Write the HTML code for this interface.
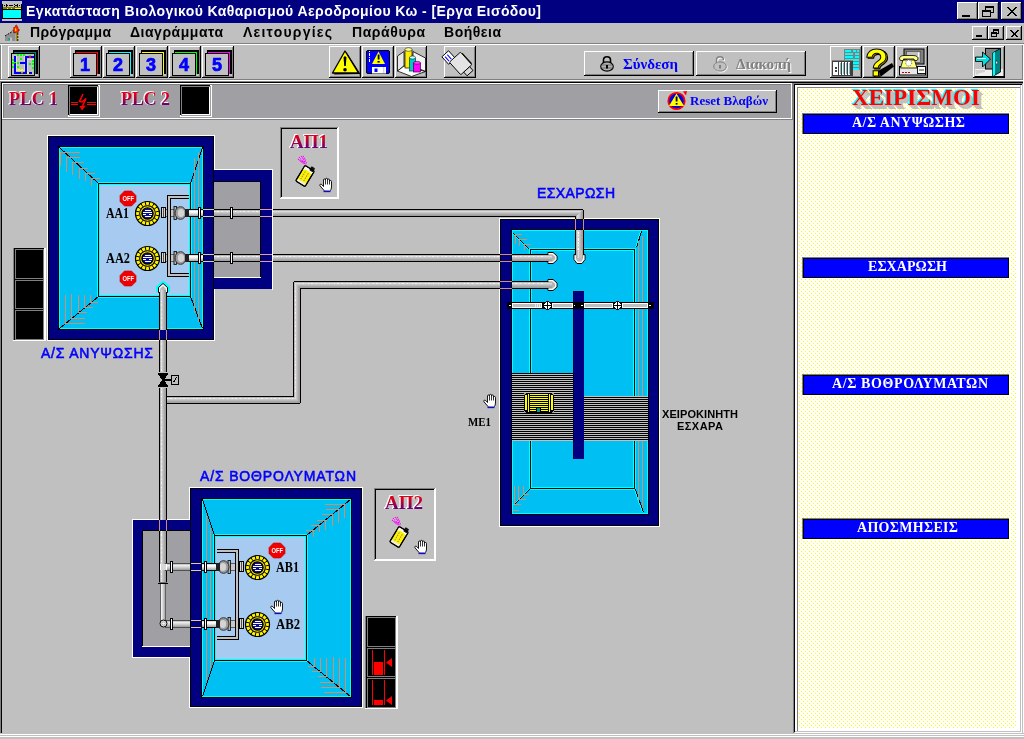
<!DOCTYPE html>
<html><head><meta charset="utf-8"><title>SCADA</title>
<style>
html,body{margin:0;padding:0}
body{width:1024px;height:739px;overflow:hidden;background:#c0c0c0;position:relative;font-family:"Liberation Sans",sans-serif}
</style></head><body>
<svg width="1024" height="739" viewBox="0 0 1024 739" shape-rendering="crispEdges" style="position:absolute;left:0;top:0;will-change:transform"><defs><linearGradient id="rb" x1="0" y1="0" x2="0" y2="1"><stop offset="0" stop-color="#ff0000"/><stop offset="0.45" stop-color="#c00030"/><stop offset="1" stop-color="#3000a0"/></linearGradient></defs><rect x="214" y="170" width="58" height="119" fill="#000080"/><rect x="214" y="169" width="59" height="1" fill="#ffffff"/><rect x="272" y="169" width="1" height="121" fill="#ffffff"/><rect x="214" y="182" width="46" height="95" fill="#a0a0a4"/><rect x="214" y="181" width="47" height="1" fill="#000000"/><rect x="260" y="181" width="1" height="97" fill="#000000"/><rect x="214" y="277" width="47" height="1" fill="#ffffff"/><rect x="47" y="135" width="168" height="1" fill="#ffffff"/><rect x="47" y="340" width="168" height="1" fill="#ffffff"/><rect x="47" y="135" width="1" height="206" fill="#ffffff"/><rect x="214" y="135" width="1" height="206" fill="#ffffff"/><rect x="48" y="136" width="166" height="204" fill="#000080"/><rect x="48" y="136" width="166" height="1" fill="#000000"/><rect x="48" y="339" width="166" height="1" fill="#000000"/><rect x="48" y="136" width="1" height="204" fill="#000000"/><rect x="213" y="136" width="1" height="204" fill="#000000"/><rect x="59" y="147" width="144" height="182" fill="#00bff3"/><rect x="59" y="147" width="144" height="1" fill="#00ffff"/><rect x="59" y="328" width="144" height="1" fill="#00ffff"/><rect x="59" y="147" width="1" height="182" fill="#00ffff"/><rect x="202" y="147" width="1" height="182" fill="#00ffff"/><rect x="58" y="146" width="146" height="1" fill="#000000"/><rect x="58" y="329" width="146" height="1" fill="#000000"/><rect x="58" y="146" width="1" height="184" fill="#000000"/><rect x="203" y="146" width="1" height="184" fill="#000000"/><rect x="99" y="184" width="92" height="113" fill="#a6caf0"/><rect x="97" y="182" width="95" height="1" fill="#00ffff"/><rect x="97" y="297" width="95" height="1" fill="#00ffff"/><rect x="97" y="182" width="1" height="116" fill="#00ffff"/><rect x="191" y="182" width="1" height="116" fill="#00ffff"/><rect x="99" y="184" width="91" height="1" fill="#00ffff"/><rect x="99" y="295" width="91" height="1" fill="#00ffff"/><rect x="99" y="184" width="1" height="112" fill="#00ffff"/><rect x="189" y="184" width="1" height="112" fill="#00ffff"/><rect x="98" y="183" width="93" height="1" fill="#000000"/><rect x="98" y="296" width="93" height="1" fill="#000000"/><rect x="98" y="183" width="1" height="114" fill="#000000"/><rect x="190" y="183" width="1" height="114" fill="#000000"/><line x1="59.5" y1="147.5" x2="98.5" y2="183.5" stroke="#000000" stroke-width="1"/><line x1="202.5" y1="147.5" x2="190.5" y2="183.5" stroke="#000000" stroke-width="1"/><line x1="59.5" y1="328.5" x2="98.5" y2="296.5" stroke="#000000" stroke-width="1"/><line x1="202.5" y1="328.5" x2="190.5" y2="296.5" stroke="#000000" stroke-width="1"/><rect x="214" y="170" width="1" height="119" fill="#000080"/><rect x="214" y="182" width="1" height="95" fill="#a0a0a4"/><rect x="214" y="181" width="1" height="1" fill="#000000"/><rect x="214" y="277" width="1" height="1" fill="#ffffff"/><rect x="60" y="152" width="20" height="1" fill="#d0906c"/><rect x="67" y="157" width="13" height="1" fill="#d0906c"/><rect x="72" y="162" width="12" height="1" fill="#d0906c"/><rect x="79" y="168" width="9" height="1" fill="#d0906c"/><rect x="85" y="173" width="10" height="1" fill="#d0906c"/><rect x="91" y="178" width="9" height="1" fill="#d0906c"/><rect x="60" y="152" width="1" height="14" fill="#d0906c"/><rect x="66" y="157" width="1" height="15" fill="#d0906c"/><rect x="72" y="162" width="1" height="13" fill="#d0906c"/><rect x="79" y="168" width="1" height="11" fill="#d0906c"/><rect x="85" y="173" width="1" height="8" fill="#d0906c"/><rect x="91" y="178" width="1" height="8" fill="#d0906c"/><rect x="91" y="302" width="7" height="1" fill="#d0906c"/><rect x="85" y="307" width="8" height="1" fill="#d0906c"/><rect x="79" y="312" width="8" height="1" fill="#d0906c"/><rect x="72" y="318" width="13" height="1" fill="#d0906c"/><rect x="66" y="323" width="19" height="1" fill="#d0906c"/><rect x="65" y="295" width="1" height="29" fill="#d0906c"/><rect x="71" y="294" width="1" height="25" fill="#d0906c"/><rect x="78" y="295" width="1" height="18" fill="#d0906c"/><rect x="84" y="295" width="1" height="13" fill="#d0906c"/><rect x="90" y="295" width="1" height="8" fill="#d0906c"/><rect x="194" y="158" width="1" height="155" fill="#d0906c"/><rect x="198" y="152" width="1" height="170" fill="#d0906c"/><rect x="499" y="218" width="161" height="1" fill="#ffffff"/><rect x="499" y="526" width="161" height="1" fill="#ffffff"/><rect x="499" y="218" width="1" height="309" fill="#ffffff"/><rect x="659" y="218" width="1" height="309" fill="#ffffff"/><rect x="500" y="219" width="159" height="307" fill="#000080"/><rect x="500" y="219" width="159" height="1" fill="#000000"/><rect x="500" y="525" width="159" height="1" fill="#000000"/><rect x="500" y="219" width="1" height="307" fill="#000000"/><rect x="658" y="219" width="1" height="307" fill="#000000"/><rect x="512" y="230" width="136" height="284" fill="#00bff3"/><rect x="512" y="230" width="136" height="1" fill="#00ffff"/><rect x="512" y="513" width="136" height="1" fill="#00ffff"/><rect x="512" y="230" width="1" height="284" fill="#00ffff"/><rect x="647" y="230" width="1" height="284" fill="#00ffff"/><rect x="511" y="229" width="138" height="1" fill="#000000"/><rect x="511" y="514" width="138" height="1" fill="#000000"/><rect x="511" y="229" width="1" height="286" fill="#000000"/><rect x="648" y="229" width="1" height="286" fill="#000000"/><rect x="531" y="250" width="104" height="239" fill="#00bff3"/><rect x="529" y="248" width="107" height="1" fill="#00ffff"/><rect x="529" y="489" width="107" height="1" fill="#00ffff"/><rect x="529" y="248" width="1" height="242" fill="#00ffff"/><rect x="635" y="248" width="1" height="242" fill="#00ffff"/><rect x="531" y="250" width="103" height="1" fill="#00ffff"/><rect x="531" y="487" width="103" height="1" fill="#00ffff"/><rect x="531" y="250" width="1" height="238" fill="#00ffff"/><rect x="633" y="250" width="1" height="238" fill="#00ffff"/><rect x="530" y="249" width="105" height="1" fill="#000000"/><rect x="530" y="488" width="105" height="1" fill="#000000"/><rect x="530" y="249" width="1" height="240" fill="#000000"/><rect x="634" y="249" width="1" height="240" fill="#000000"/><line x1="512.5" y1="233.5" x2="528.5" y2="249.5" stroke="#00ffff" stroke-width="1"/><line x1="513.5" y1="233.5" x2="529.5" y2="249.5" stroke="#000000" stroke-width="1"/><line x1="640.5" y1="231.5" x2="635.5" y2="247.5" stroke="#00ffff" stroke-width="1"/><line x1="641.5" y1="231.5" x2="636.5" y2="247.5" stroke="#000000" stroke-width="1"/><line x1="512.5" y1="505.5" x2="529.5" y2="488.5" stroke="#00ffff" stroke-width="1"/><line x1="513.5" y1="505.5" x2="530.5" y2="488.5" stroke="#000000" stroke-width="1"/><line x1="642.5" y1="512.5" x2="634.5" y2="489.5" stroke="#00ffff" stroke-width="1"/><line x1="643.5" y1="512.5" x2="635.5" y2="489.5" stroke="#000000" stroke-width="1"/><rect x="515" y="234" width="7" height="1" fill="#d0906c"/><rect x="519" y="239" width="8" height="1" fill="#d0906c"/><rect x="524" y="244" width="7" height="1" fill="#d0906c"/><rect x="515" y="234" width="1" height="10" fill="#d0906c"/><rect x="519" y="239" width="1" height="7" fill="#d0906c"/><rect x="524" y="244" width="1" height="6" fill="#d0906c"/><rect x="524" y="494" width="5" height="1" fill="#d0906c"/><rect x="519" y="499" width="7" height="1" fill="#d0906c"/><rect x="515" y="504" width="6" height="1" fill="#d0906c"/><rect x="513" y="510" width="6" height="1" fill="#d0906c"/><rect x="514" y="486" width="1" height="19" fill="#d0906c"/><rect x="518" y="486" width="1" height="14" fill="#d0906c"/><rect x="523" y="486" width="1" height="9" fill="#d0906c"/><rect x="638" y="241" width="1" height="259" fill="#d0906c"/><rect x="642" y="236" width="1" height="272" fill="#d0906c"/><rect x="512" y="373" width="61" height="68" fill="#c0c0c0"/><rect x="512" y="373" width="61" height="1" fill="#000000"/><rect x="512" y="375" width="61" height="1" fill="#000000"/><rect x="512" y="377" width="61" height="1" fill="#000000"/><rect x="512" y="379" width="61" height="1" fill="#000000"/><rect x="512" y="381" width="61" height="1" fill="#000000"/><rect x="512" y="383" width="61" height="1" fill="#000000"/><rect x="512" y="385" width="61" height="1" fill="#000000"/><rect x="512" y="387" width="61" height="1" fill="#000000"/><rect x="512" y="389" width="61" height="1" fill="#000000"/><rect x="512" y="391" width="61" height="1" fill="#000000"/><rect x="512" y="393" width="61" height="1" fill="#000000"/><rect x="512" y="395" width="61" height="1" fill="#000000"/><rect x="512" y="397" width="61" height="1" fill="#000000"/><rect x="512" y="399" width="61" height="1" fill="#000000"/><rect x="512" y="401" width="61" height="1" fill="#000000"/><rect x="512" y="403" width="61" height="1" fill="#000000"/><rect x="512" y="405" width="61" height="1" fill="#000000"/><rect x="512" y="407" width="61" height="1" fill="#000000"/><rect x="512" y="409" width="61" height="1" fill="#000000"/><rect x="512" y="411" width="61" height="1" fill="#000000"/><rect x="512" y="413" width="61" height="1" fill="#000000"/><rect x="512" y="415" width="61" height="1" fill="#000000"/><rect x="512" y="417" width="61" height="1" fill="#000000"/><rect x="512" y="419" width="61" height="1" fill="#000000"/><rect x="512" y="421" width="61" height="1" fill="#000000"/><rect x="512" y="423" width="61" height="1" fill="#000000"/><rect x="512" y="425" width="61" height="1" fill="#000000"/><rect x="512" y="427" width="61" height="1" fill="#000000"/><rect x="512" y="429" width="61" height="1" fill="#000000"/><rect x="512" y="431" width="61" height="1" fill="#000000"/><rect x="512" y="433" width="61" height="1" fill="#000000"/><rect x="512" y="435" width="61" height="1" fill="#000000"/><rect x="512" y="437" width="61" height="1" fill="#000000"/><rect x="512" y="439" width="61" height="1" fill="#000000"/><rect x="584" y="396" width="64" height="45" fill="#c0c0c0"/><rect x="584" y="397" width="64" height="1" fill="#000000"/><rect x="584" y="399" width="64" height="1" fill="#000000"/><rect x="584" y="401" width="64" height="1" fill="#000000"/><rect x="584" y="403" width="64" height="1" fill="#000000"/><rect x="584" y="405" width="64" height="1" fill="#000000"/><rect x="584" y="407" width="64" height="1" fill="#000000"/><rect x="584" y="409" width="64" height="1" fill="#000000"/><rect x="584" y="411" width="64" height="1" fill="#000000"/><rect x="584" y="413" width="64" height="1" fill="#000000"/><rect x="584" y="415" width="64" height="1" fill="#000000"/><rect x="584" y="417" width="64" height="1" fill="#000000"/><rect x="584" y="419" width="64" height="1" fill="#000000"/><rect x="584" y="421" width="64" height="1" fill="#000000"/><rect x="584" y="423" width="64" height="1" fill="#000000"/><rect x="584" y="425" width="64" height="1" fill="#000000"/><rect x="584" y="427" width="64" height="1" fill="#000000"/><rect x="584" y="429" width="64" height="1" fill="#000000"/><rect x="584" y="431" width="64" height="1" fill="#000000"/><rect x="584" y="433" width="64" height="1" fill="#000000"/><rect x="584" y="435" width="64" height="1" fill="#000000"/><rect x="584" y="437" width="64" height="1" fill="#000000"/><rect x="584" y="439" width="64" height="1" fill="#000000"/><rect x="573" y="291" width="11" height="168" fill="#000080"/><rect x="573" y="291" width="1" height="168" fill="#000040"/><rect x="573" y="291" width="11" height="1" fill="#000040"/><rect x="507" y="302" width="147" height="7" fill="#000000"/><rect x="512" y="303" width="30" height="5" fill="#ffffff"/><rect x="513" y="304" width="28" height="3" fill="#c0c0c0"/><rect x="552" y="303" width="21" height="5" fill="#ffffff"/><rect x="553" y="304" width="19" height="3" fill="#c0c0c0"/><rect x="584" y="303" width="29" height="5" fill="#ffffff"/><rect x="585" y="304" width="27" height="3" fill="#c0c0c0"/><rect x="622" y="303" width="26" height="5" fill="#ffffff"/><rect x="623" y="304" width="24" height="3" fill="#c0c0c0"/><rect x="509" y="305" width="2" height="1" fill="#ffffff"/><rect x="649" y="305" width="2" height="1" fill="#ffffff"/><rect x="574" y="305" width="1" height="1" fill="#ffffff"/><rect x="581" y="305" width="2" height="1" fill="#ffffff"/><rect x="546" y="301" width="1" height="1" fill="#000000"/><rect x="547" y="301" width="1" height="1" fill="#000000"/><rect x="548" y="301" width="1" height="1" fill="#000000"/><rect x="544" y="302" width="1" height="1" fill="#000000"/><rect x="545" y="302" width="1" height="1" fill="#000000"/><rect x="546" y="302" width="1" height="1" fill="#ffffff"/><rect x="547" y="302" width="1" height="1" fill="#000000"/><rect x="548" y="302" width="1" height="1" fill="#ffffff"/><rect x="549" y="302" width="1" height="1" fill="#000000"/><rect x="550" y="302" width="1" height="1" fill="#000000"/><rect x="544" y="303" width="1" height="1" fill="#000000"/><rect x="545" y="303" width="1" height="1" fill="#ffffff"/><rect x="546" y="303" width="1" height="1" fill="#ffffff"/><rect x="547" y="303" width="1" height="1" fill="#000000"/><rect x="548" y="303" width="1" height="1" fill="#ffffff"/><rect x="549" y="303" width="1" height="1" fill="#ffffff"/><rect x="550" y="303" width="1" height="1" fill="#000000"/><rect x="543" y="304" width="1" height="1" fill="#000000"/><rect x="544" y="304" width="1" height="1" fill="#ffffff"/><rect x="545" y="304" width="1" height="1" fill="#ffffff"/><rect x="546" y="304" width="1" height="1" fill="#ffffff"/><rect x="547" y="304" width="1" height="1" fill="#000000"/><rect x="548" y="304" width="1" height="1" fill="#ffffff"/><rect x="549" y="304" width="1" height="1" fill="#ffffff"/><rect x="550" y="304" width="1" height="1" fill="#ffffff"/><rect x="551" y="304" width="1" height="1" fill="#000000"/><rect x="543" y="305" width="1" height="1" fill="#000000"/><rect x="544" y="305" width="1" height="1" fill="#000000"/><rect x="545" y="305" width="1" height="1" fill="#000000"/><rect x="546" y="305" width="1" height="1" fill="#000000"/><rect x="547" y="305" width="1" height="1" fill="#000000"/><rect x="548" y="305" width="1" height="1" fill="#000000"/><rect x="549" y="305" width="1" height="1" fill="#000000"/><rect x="550" y="305" width="1" height="1" fill="#000000"/><rect x="551" y="305" width="1" height="1" fill="#000000"/><rect x="543" y="306" width="1" height="1" fill="#000000"/><rect x="544" y="306" width="1" height="1" fill="#ffffff"/><rect x="545" y="306" width="1" height="1" fill="#ffffff"/><rect x="546" y="306" width="1" height="1" fill="#ffffff"/><rect x="547" y="306" width="1" height="1" fill="#000000"/><rect x="548" y="306" width="1" height="1" fill="#ffffff"/><rect x="549" y="306" width="1" height="1" fill="#ffffff"/><rect x="550" y="306" width="1" height="1" fill="#ffffff"/><rect x="551" y="306" width="1" height="1" fill="#000000"/><rect x="544" y="307" width="1" height="1" fill="#000000"/><rect x="545" y="307" width="1" height="1" fill="#ffffff"/><rect x="546" y="307" width="1" height="1" fill="#ffffff"/><rect x="547" y="307" width="1" height="1" fill="#000000"/><rect x="548" y="307" width="1" height="1" fill="#ffffff"/><rect x="549" y="307" width="1" height="1" fill="#ffffff"/><rect x="550" y="307" width="1" height="1" fill="#000000"/><rect x="544" y="308" width="1" height="1" fill="#000000"/><rect x="545" y="308" width="1" height="1" fill="#000000"/><rect x="546" y="308" width="1" height="1" fill="#ffffff"/><rect x="547" y="308" width="1" height="1" fill="#000000"/><rect x="548" y="308" width="1" height="1" fill="#ffffff"/><rect x="549" y="308" width="1" height="1" fill="#000000"/><rect x="550" y="308" width="1" height="1" fill="#000000"/><rect x="546" y="309" width="1" height="1" fill="#000000"/><rect x="547" y="309" width="1" height="1" fill="#000000"/><rect x="548" y="309" width="1" height="1" fill="#000000"/><rect x="616" y="301" width="1" height="1" fill="#000000"/><rect x="617" y="301" width="1" height="1" fill="#000000"/><rect x="618" y="301" width="1" height="1" fill="#000000"/><rect x="614" y="302" width="1" height="1" fill="#000000"/><rect x="615" y="302" width="1" height="1" fill="#000000"/><rect x="616" y="302" width="1" height="1" fill="#ffffff"/><rect x="617" y="302" width="1" height="1" fill="#000000"/><rect x="618" y="302" width="1" height="1" fill="#ffffff"/><rect x="619" y="302" width="1" height="1" fill="#000000"/><rect x="620" y="302" width="1" height="1" fill="#000000"/><rect x="614" y="303" width="1" height="1" fill="#000000"/><rect x="615" y="303" width="1" height="1" fill="#ffffff"/><rect x="616" y="303" width="1" height="1" fill="#ffffff"/><rect x="617" y="303" width="1" height="1" fill="#000000"/><rect x="618" y="303" width="1" height="1" fill="#ffffff"/><rect x="619" y="303" width="1" height="1" fill="#ffffff"/><rect x="620" y="303" width="1" height="1" fill="#000000"/><rect x="613" y="304" width="1" height="1" fill="#000000"/><rect x="614" y="304" width="1" height="1" fill="#ffffff"/><rect x="615" y="304" width="1" height="1" fill="#ffffff"/><rect x="616" y="304" width="1" height="1" fill="#ffffff"/><rect x="617" y="304" width="1" height="1" fill="#000000"/><rect x="618" y="304" width="1" height="1" fill="#ffffff"/><rect x="619" y="304" width="1" height="1" fill="#ffffff"/><rect x="620" y="304" width="1" height="1" fill="#ffffff"/><rect x="621" y="304" width="1" height="1" fill="#000000"/><rect x="613" y="305" width="1" height="1" fill="#000000"/><rect x="614" y="305" width="1" height="1" fill="#000000"/><rect x="615" y="305" width="1" height="1" fill="#000000"/><rect x="616" y="305" width="1" height="1" fill="#000000"/><rect x="617" y="305" width="1" height="1" fill="#000000"/><rect x="618" y="305" width="1" height="1" fill="#000000"/><rect x="619" y="305" width="1" height="1" fill="#000000"/><rect x="620" y="305" width="1" height="1" fill="#000000"/><rect x="621" y="305" width="1" height="1" fill="#000000"/><rect x="613" y="306" width="1" height="1" fill="#000000"/><rect x="614" y="306" width="1" height="1" fill="#ffffff"/><rect x="615" y="306" width="1" height="1" fill="#ffffff"/><rect x="616" y="306" width="1" height="1" fill="#ffffff"/><rect x="617" y="306" width="1" height="1" fill="#000000"/><rect x="618" y="306" width="1" height="1" fill="#ffffff"/><rect x="619" y="306" width="1" height="1" fill="#ffffff"/><rect x="620" y="306" width="1" height="1" fill="#ffffff"/><rect x="621" y="306" width="1" height="1" fill="#000000"/><rect x="614" y="307" width="1" height="1" fill="#000000"/><rect x="615" y="307" width="1" height="1" fill="#ffffff"/><rect x="616" y="307" width="1" height="1" fill="#ffffff"/><rect x="617" y="307" width="1" height="1" fill="#000000"/><rect x="618" y="307" width="1" height="1" fill="#ffffff"/><rect x="619" y="307" width="1" height="1" fill="#ffffff"/><rect x="620" y="307" width="1" height="1" fill="#000000"/><rect x="614" y="308" width="1" height="1" fill="#000000"/><rect x="615" y="308" width="1" height="1" fill="#000000"/><rect x="616" y="308" width="1" height="1" fill="#ffffff"/><rect x="617" y="308" width="1" height="1" fill="#000000"/><rect x="618" y="308" width="1" height="1" fill="#ffffff"/><rect x="619" y="308" width="1" height="1" fill="#000000"/><rect x="620" y="308" width="1" height="1" fill="#000000"/><rect x="616" y="309" width="1" height="1" fill="#000000"/><rect x="617" y="309" width="1" height="1" fill="#000000"/><rect x="618" y="309" width="1" height="1" fill="#000000"/><rect x="535" y="304" width="1" height="3" fill="#e8e8e8"/><rect x="537" y="304" width="1" height="3" fill="#e8e8e8"/><rect x="539" y="304" width="1" height="3" fill="#e8e8e8"/><rect x="524" y="393" width="30" height="20" fill="#000000"/><rect x="524" y="393" width="1" height="1" fill="#a0a0a0"/><rect x="525" y="393" width="1" height="1" fill="#a0a0a0"/><rect x="524" y="394" width="1" height="1" fill="#a0a0a0"/><rect x="553" y="393" width="1" height="1" fill="#a0a0a0"/><rect x="552" y="393" width="1" height="1" fill="#a0a0a0"/><rect x="553" y="394" width="1" height="1" fill="#a0a0a0"/><rect x="524" y="412" width="1" height="1" fill="#a0a0a0"/><rect x="525" y="412" width="1" height="1" fill="#a0a0a0"/><rect x="524" y="411" width="1" height="1" fill="#a0a0a0"/><rect x="553" y="412" width="1" height="1" fill="#a0a0a0"/><rect x="552" y="412" width="1" height="1" fill="#a0a0a0"/><rect x="553" y="411" width="1" height="1" fill="#a0a0a0"/><rect x="525" y="395" width="2" height="15" fill="#ffff00"/><rect x="528" y="394" width="1" height="18" fill="#ffff00"/><rect x="549" y="394" width="1" height="18" fill="#ffff00"/><rect x="551" y="395" width="2" height="15" fill="#ffff00"/><rect x="530" y="394" width="18" height="1" fill="#ffff00"/><rect x="530" y="396" width="18" height="1" fill="#ffff00"/><rect x="530" y="398" width="18" height="1" fill="#ffff00"/><rect x="530" y="400" width="18" height="1" fill="#ffff00"/><rect x="530" y="402" width="18" height="1" fill="#ffff00"/><rect x="530" y="404" width="18" height="1" fill="#ffff00"/><rect x="530" y="406" width="18" height="1" fill="#ffff00"/><rect x="530" y="408" width="18" height="1" fill="#ffff00"/><rect x="530" y="410" width="18" height="1" fill="#ffff00"/><rect x="536" y="407" width="5" height="7" fill="#000000"/><rect x="537" y="408" width="3" height="4" fill="#009090"/><rect x="133" y="520" width="58" height="137" fill="#000080"/><rect x="132" y="519" width="59" height="1" fill="#ffffff"/><rect x="132" y="519" width="1" height="139" fill="#ffffff"/><rect x="132" y="657" width="59" height="1" fill="#ffffff"/><rect x="143" y="531" width="48" height="115" fill="#a0a0a4"/><rect x="142" y="530" width="49" height="1" fill="#000000"/><rect x="142" y="530" width="1" height="117" fill="#000000"/><rect x="142" y="646" width="49" height="1" fill="#ffffff"/><rect x="189" y="487" width="174" height="1" fill="#ffffff"/><rect x="189" y="707" width="174" height="1" fill="#ffffff"/><rect x="189" y="487" width="1" height="221" fill="#ffffff"/><rect x="362" y="487" width="1" height="221" fill="#ffffff"/><rect x="190" y="488" width="172" height="219" fill="#000080"/><rect x="190" y="488" width="172" height="1" fill="#000000"/><rect x="190" y="706" width="172" height="1" fill="#000000"/><rect x="190" y="488" width="1" height="219" fill="#000000"/><rect x="361" y="488" width="1" height="219" fill="#000000"/><rect x="202" y="499" width="149" height="198" fill="#00bff3"/><rect x="202" y="499" width="149" height="1" fill="#00ffff"/><rect x="202" y="696" width="149" height="1" fill="#00ffff"/><rect x="202" y="499" width="1" height="198" fill="#00ffff"/><rect x="350" y="499" width="1" height="198" fill="#00ffff"/><rect x="201" y="498" width="151" height="1" fill="#000000"/><rect x="201" y="697" width="151" height="1" fill="#000000"/><rect x="201" y="498" width="1" height="200" fill="#000000"/><rect x="351" y="498" width="1" height="200" fill="#000000"/><rect x="215" y="536" width="92" height="125" fill="#a6caf0"/><rect x="213" y="534" width="95" height="1" fill="#00ffff"/><rect x="213" y="661" width="95" height="1" fill="#00ffff"/><rect x="213" y="534" width="1" height="128" fill="#00ffff"/><rect x="307" y="534" width="1" height="128" fill="#00ffff"/><rect x="215" y="536" width="91" height="1" fill="#00ffff"/><rect x="215" y="659" width="91" height="1" fill="#00ffff"/><rect x="215" y="536" width="1" height="124" fill="#00ffff"/><rect x="305" y="536" width="1" height="124" fill="#00ffff"/><rect x="214" y="535" width="93" height="1" fill="#000000"/><rect x="214" y="660" width="93" height="1" fill="#000000"/><rect x="214" y="535" width="1" height="126" fill="#000000"/><rect x="306" y="535" width="1" height="126" fill="#000000"/><line x1="202.5" y1="499.5" x2="214.5" y2="535.5" stroke="#000000" stroke-width="1"/><line x1="350.5" y1="499.5" x2="306.5" y2="535.5" stroke="#000000" stroke-width="1"/><line x1="202.5" y1="696.5" x2="214.5" y2="660.5" stroke="#000000" stroke-width="1"/><line x1="350.5" y1="696.5" x2="306.5" y2="660.5" stroke="#000000" stroke-width="1"/><rect x="189" y="520" width="1" height="137" fill="#000080"/><rect x="189" y="531" width="1" height="115" fill="#a0a0a4"/><rect x="189" y="530" width="1" height="1" fill="#000000"/><rect x="189" y="646" width="1" height="1" fill="#ffffff"/><rect x="325" y="504" width="20" height="1" fill="#d0906c"/><rect x="326" y="509" width="13" height="1" fill="#d0906c"/><rect x="322" y="514" width="11" height="1" fill="#d0906c"/><rect x="317" y="520" width="10" height="1" fill="#d0906c"/><rect x="311" y="525" width="10" height="1" fill="#d0906c"/><rect x="306" y="530" width="9" height="1" fill="#d0906c"/><rect x="344" y="504" width="1" height="14" fill="#d0906c"/><rect x="338" y="509" width="1" height="14" fill="#d0906c"/><rect x="332" y="514" width="1" height="12" fill="#d0906c"/><rect x="325" y="520" width="1" height="10" fill="#d0906c"/><rect x="319" y="525" width="1" height="7" fill="#d0906c"/><rect x="313" y="530" width="1" height="7" fill="#d0906c"/><rect x="308" y="666" width="7" height="1" fill="#d0906c"/><rect x="312" y="671" width="9" height="1" fill="#d0906c"/><rect x="318" y="676" width="9" height="1" fill="#d0906c"/><rect x="320" y="682" width="14" height="1" fill="#d0906c"/><rect x="321" y="687" width="19" height="1" fill="#d0906c"/><rect x="324" y="692" width="22" height="1" fill="#d0906c"/><rect x="314" y="658" width="1" height="9" fill="#d0906c"/><rect x="320" y="658" width="1" height="14" fill="#d0906c"/><rect x="326" y="658" width="1" height="19" fill="#d0906c"/><rect x="333" y="657" width="1" height="26" fill="#d0906c"/><rect x="339" y="658" width="1" height="30" fill="#d0906c"/><rect x="345" y="658" width="1" height="35" fill="#d0906c"/><rect x="206" y="515" width="1" height="166" fill="#d0906c"/><rect x="210" y="528" width="1" height="141" fill="#d0906c"/><rect x="214" y="209" width="46" height="1" fill="#000000"/><rect x="214" y="210" width="46" height="1" fill="#b8b8b0"/><rect x="214" y="211" width="46" height="1" fill="#dcdcdc"/><rect x="214" y="212" width="46" height="1" fill="#c8c8cc"/><rect x="214" y="213" width="46" height="1" fill="#b8b8bc"/><rect x="214" y="214" width="46" height="1" fill="#a8a8ac"/><rect x="214" y="215" width="46" height="1" fill="#a0a098"/><rect x="214" y="216" width="46" height="1" fill="#000000"/><line x1="214" y1="211.5" x2="260" y2="211.5" stroke="#f4f4f4" stroke-width="1" stroke-dasharray="1 2 2 3 1 4"/><rect x="203" y="209" width="11" height="1" fill="#d8d488"/><rect x="203" y="216" width="11" height="1" fill="#d8d488"/><rect x="260" y="209" width="12" height="1" fill="#e0a0a0"/><rect x="260" y="216" width="12" height="1" fill="#e0a0a0"/><rect x="273" y="209" width="310" height="1" fill="#000000"/><rect x="273" y="210" width="310" height="1" fill="#b8b8b0"/><rect x="273" y="211" width="310" height="1" fill="#dcdcdc"/><rect x="273" y="212" width="310" height="1" fill="#c8c8cc"/><rect x="273" y="213" width="310" height="1" fill="#b8b8bc"/><rect x="273" y="214" width="310" height="1" fill="#a8a8ac"/><rect x="273" y="215" width="310" height="1" fill="#a0a098"/><rect x="273" y="216" width="310" height="1" fill="#000000"/><line x1="273" y1="211.5" x2="583" y2="211.5" stroke="#f4f4f4" stroke-width="1" stroke-dasharray="1 2 2 3 1 4"/><rect x="575" y="212" width="1" height="7" fill="#000000"/><rect x="576" y="212" width="1" height="7" fill="#b8b8b0"/><rect x="577" y="212" width="1" height="7" fill="#dcdcdc"/><rect x="578" y="212" width="1" height="7" fill="#d0d0d0"/><rect x="579" y="212" width="1" height="7" fill="#c8c8cc"/><rect x="580" y="212" width="1" height="7" fill="#b8b8bc"/><rect x="581" y="212" width="1" height="7" fill="#a8a8ac"/><rect x="582" y="212" width="1" height="7" fill="#a0a098"/><rect x="583" y="212" width="1" height="7" fill="#000000"/><rect x="273" y="209" width="310" height="1" fill="#000000"/><rect x="273" y="210" width="309" height="1" fill="#b8b8b0"/><rect x="273" y="211" width="308" height="1" fill="#dcdcdc"/><rect x="273" y="212" width="307" height="1" fill="#c8c8cc"/><rect x="273" y="213" width="306" height="1" fill="#b8b8bc"/><rect x="273" y="214" width="305" height="1" fill="#a8a8ac"/><rect x="273" y="215" width="304" height="1" fill="#a0a098"/><rect x="273" y="216" width="303" height="1" fill="#000000"/><rect x="575" y="217" width="1" height="2" fill="#000000"/><rect x="576" y="216" width="1" height="3" fill="#b8b8b0"/><rect x="577" y="215" width="1" height="4" fill="#dcdcdc"/><rect x="578" y="214" width="1" height="5" fill="#d0d0d0"/><rect x="579" y="213" width="1" height="6" fill="#c8c8cc"/><rect x="580" y="212" width="1" height="7" fill="#b8b8bc"/><rect x="581" y="211" width="1" height="8" fill="#a8a8ac"/><rect x="582" y="210" width="1" height="9" fill="#a0a098"/><rect x="583" y="209" width="1" height="10" fill="#000000"/><rect x="583" y="209" width="1" height="1" fill="#c0c0c0"/><rect x="273" y="209" width="310" height="1" fill="#000000"/><rect x="583" y="210" width="1" height="9" fill="#000000"/><rect x="575" y="217" width="1" height="2" fill="#000000"/><line x1="575.5" y1="219" x2="575.5" y2="230" stroke="#d0906c"/><line x1="583.5" y1="219" x2="583.5" y2="230" stroke="#d0906c"/><rect x="575" y="230" width="1" height="27" fill="#000000"/><rect x="576" y="230" width="1" height="27" fill="#b8b8b0"/><rect x="577" y="230" width="1" height="27" fill="#dcdcdc"/><rect x="578" y="230" width="1" height="27" fill="#d0d0d0"/><rect x="579" y="230" width="1" height="27" fill="#c8c8cc"/><rect x="580" y="230" width="1" height="27" fill="#b8b8bc"/><rect x="581" y="230" width="1" height="27" fill="#a8a8ac"/><rect x="582" y="230" width="1" height="27" fill="#a0a098"/><rect x="583" y="230" width="1" height="27" fill="#000000"/><line x1="578.5" y1="232" x2="578.5" y2="256" stroke="#fff" stroke-width="1" stroke-dasharray="2 1 1 2 3 1"/><g shape-rendering="auto"><path d="M574 254.5 L585 254.5 L585 259.5 L582 263.5 L577 263.5 L574 259.5 Z" fill="#b8b8b8" stroke="#000" stroke-width="1"/><path d="M575.2 255.5 L575.2 259.2 L577.6 262.3 L581.4 262.3 L583.8 259.2 L583.8 255.5" fill="none" stroke="#fff" stroke-width="1.2"/></g><rect x="576" y="250" width="7" height="8" fill="#c0c0c0"/><rect x="576" y="250" width="1" height="8" fill="#a8a8a8"/><rect x="582" y="250" width="1" height="8" fill="#a0a098"/><rect x="578" y="250" width="1" height="8" fill="#dcdcdc"/><rect x="214" y="254" width="46" height="1" fill="#000000"/><rect x="214" y="255" width="46" height="1" fill="#b8b8b0"/><rect x="214" y="256" width="46" height="1" fill="#dcdcdc"/><rect x="214" y="257" width="46" height="1" fill="#c8c8cc"/><rect x="214" y="258" width="46" height="1" fill="#b8b8bc"/><rect x="214" y="259" width="46" height="1" fill="#a8a8ac"/><rect x="214" y="260" width="46" height="1" fill="#a0a098"/><rect x="214" y="261" width="46" height="1" fill="#000000"/><line x1="214" y1="256.5" x2="260" y2="256.5" stroke="#f4f4f4" stroke-width="1" stroke-dasharray="1 2 2 3 1 4"/><rect x="203" y="254" width="11" height="1" fill="#d8d488"/><rect x="203" y="261" width="11" height="1" fill="#d8d488"/><rect x="260" y="254" width="12" height="1" fill="#e0a0a0"/><rect x="260" y="261" width="12" height="1" fill="#e0a0a0"/><rect x="273" y="254" width="227" height="1" fill="#000000"/><rect x="273" y="255" width="227" height="1" fill="#b8b8b0"/><rect x="273" y="256" width="227" height="1" fill="#dcdcdc"/><rect x="273" y="257" width="227" height="1" fill="#c8c8cc"/><rect x="273" y="258" width="227" height="1" fill="#b8b8bc"/><rect x="273" y="259" width="227" height="1" fill="#a8a8ac"/><rect x="273" y="260" width="227" height="1" fill="#a0a098"/><rect x="273" y="261" width="227" height="1" fill="#000000"/><line x1="273" y1="256.5" x2="500" y2="256.5" stroke="#f4f4f4" stroke-width="1" stroke-dasharray="1 2 2 3 1 4"/><rect x="500" y="254" width="12" height="1" fill="#d0906c"/><rect x="500" y="261" width="12" height="1" fill="#d0906c"/><rect x="512" y="254" width="38" height="1" fill="#000000"/><rect x="512" y="255" width="38" height="1" fill="#b8b8b0"/><rect x="512" y="256" width="38" height="1" fill="#dcdcdc"/><rect x="512" y="257" width="38" height="1" fill="#c8c8cc"/><rect x="512" y="258" width="38" height="1" fill="#b8b8bc"/><rect x="512" y="259" width="38" height="1" fill="#a8a8ac"/><rect x="512" y="260" width="38" height="1" fill="#a0a098"/><rect x="512" y="261" width="38" height="1" fill="#000000"/><line x1="512" y1="256.5" x2="550" y2="256.5" stroke="#f4f4f4" stroke-width="1" stroke-dasharray="1 2 2 3 1 4"/><rect x="295" y="281" width="205" height="1" fill="#000000"/><rect x="295" y="282" width="205" height="1" fill="#b8b8b0"/><rect x="295" y="283" width="205" height="1" fill="#dcdcdc"/><rect x="295" y="284" width="205" height="1" fill="#c8c8cc"/><rect x="295" y="285" width="205" height="1" fill="#b8b8bc"/><rect x="295" y="286" width="205" height="1" fill="#a8a8ac"/><rect x="295" y="287" width="205" height="1" fill="#a0a098"/><rect x="295" y="288" width="205" height="1" fill="#000000"/><line x1="295" y1="283.5" x2="500" y2="283.5" stroke="#f4f4f4" stroke-width="1" stroke-dasharray="1 2 2 3 1 4"/><rect x="500" y="281" width="12" height="1" fill="#d0906c"/><rect x="500" y="288" width="12" height="1" fill="#d0906c"/><rect x="512" y="281" width="38" height="1" fill="#000000"/><rect x="512" y="282" width="38" height="1" fill="#b8b8b0"/><rect x="512" y="283" width="38" height="1" fill="#dcdcdc"/><rect x="512" y="284" width="38" height="1" fill="#c8c8cc"/><rect x="512" y="285" width="38" height="1" fill="#b8b8bc"/><rect x="512" y="286" width="38" height="1" fill="#a8a8ac"/><rect x="512" y="287" width="38" height="1" fill="#a0a098"/><rect x="512" y="288" width="38" height="1" fill="#000000"/><line x1="512" y1="283.5" x2="550" y2="283.5" stroke="#f4f4f4" stroke-width="1" stroke-dasharray="1 2 2 3 1 4"/><rect x="293" y="283" width="1" height="119" fill="#000000"/><rect x="294" y="283" width="1" height="119" fill="#b8b8b0"/><rect x="295" y="283" width="1" height="119" fill="#dcdcdc"/><rect x="296" y="283" width="1" height="119" fill="#c8c8cc"/><rect x="297" y="283" width="1" height="119" fill="#b8b8bc"/><rect x="298" y="283" width="1" height="119" fill="#a8a8ac"/><rect x="299" y="283" width="1" height="119" fill="#a0a098"/><rect x="300" y="283" width="1" height="119" fill="#000000"/><line x1="295.5" y1="283" x2="295.5" y2="402" stroke="#f4f4f4" stroke-width="1" stroke-dasharray="1 2 2 3 1 4"/><rect x="293" y="281" width="8" height="1" fill="#000000"/><rect x="293" y="281" width="1" height="9" fill="#000000"/><rect x="294" y="282" width="7" height="1" fill="#b8b8b0"/><rect x="294" y="282" width="1" height="8" fill="#b8b8b0"/><rect x="295" y="283" width="6" height="1" fill="#dcdcdc"/><rect x="295" y="283" width="1" height="7" fill="#dcdcdc"/><rect x="296" y="284" width="5" height="1" fill="#c8c8cc"/><rect x="296" y="284" width="1" height="6" fill="#c8c8cc"/><rect x="297" y="285" width="4" height="1" fill="#b8b8bc"/><rect x="297" y="285" width="1" height="5" fill="#b8b8bc"/><rect x="298" y="286" width="3" height="1" fill="#a8a8ac"/><rect x="298" y="286" width="1" height="4" fill="#a8a8ac"/><rect x="299" y="287" width="2" height="1" fill="#a0a098"/><rect x="299" y="287" width="1" height="3" fill="#a0a098"/><rect x="300" y="288" width="1" height="1" fill="#000000"/><rect x="300" y="288" width="1" height="2" fill="#000000"/><rect x="293" y="281" width="1" height="1" fill="#c0c0c0"/><rect x="294" y="281" width="7" height="1" fill="#000000"/><rect x="293" y="282" width="1" height="8" fill="#000000"/><rect x="300" y="288" width="1" height="1" fill="#000000"/><rect x="167" y="396" width="133" height="1" fill="#000000"/><rect x="167" y="397" width="133" height="1" fill="#b8b8b0"/><rect x="167" y="398" width="133" height="1" fill="#dcdcdc"/><rect x="167" y="399" width="133" height="1" fill="#c8c8cc"/><rect x="167" y="400" width="133" height="1" fill="#b8b8bc"/><rect x="167" y="401" width="133" height="1" fill="#a8a8ac"/><rect x="167" y="402" width="133" height="1" fill="#a0a098"/><rect x="167" y="403" width="133" height="1" fill="#000000"/><line x1="167" y1="398.5" x2="300" y2="398.5" stroke="#f4f4f4" stroke-width="1" stroke-dasharray="1 2 2 3 1 4"/><rect x="293" y="403" width="8" height="1" fill="#000000"/><rect x="300" y="395" width="1" height="9" fill="#000000"/><rect x="293" y="402" width="7" height="1" fill="#a0a098"/><rect x="299" y="395" width="1" height="8" fill="#a0a098"/><rect x="293" y="401" width="6" height="1" fill="#a8a8ac"/><rect x="298" y="395" width="1" height="7" fill="#a8a8ac"/><rect x="293" y="400" width="5" height="1" fill="#b8b8bc"/><rect x="297" y="395" width="1" height="6" fill="#b8b8bc"/><rect x="293" y="399" width="4" height="1" fill="#c8c8cc"/><rect x="296" y="395" width="1" height="5" fill="#c8c8cc"/><rect x="293" y="398" width="3" height="1" fill="#dcdcdc"/><rect x="295" y="395" width="1" height="4" fill="#dcdcdc"/><rect x="293" y="397" width="2" height="1" fill="#b8b8b0"/><rect x="294" y="395" width="1" height="3" fill="#b8b8b0"/><rect x="293" y="396" width="1" height="1" fill="#000000"/><rect x="293" y="395" width="1" height="2" fill="#000000"/><rect x="300" y="403" width="1" height="1" fill="#c0c0c0"/><rect x="300" y="290" width="1" height="113" fill="#000000"/><rect x="167" y="403" width="133" height="1" fill="#000000"/><rect x="293" y="290" width="1" height="107" fill="#000000"/><g shape-rendering="auto"><path d="M548 252.5 L553 252.5 L557 256 L557 260 L553 263.5 L548 263.5 Z" fill="#b4b4b4" stroke="#000" stroke-width="1"/><path d="M548.5 253.7 L552.6 253.7 L555.8 256.5 L555.8 259.5 L552.6 262.3 L548.5 262.3" fill="none" stroke="#fff" stroke-width="1.2"/></g><rect x="546" y="255" width="6" height="1" fill="#b8b8b0"/><rect x="546" y="256" width="6" height="1" fill="#dcdcdc"/><rect x="546" y="257" width="6" height="1" fill="#c8c8cc"/><rect x="546" y="258" width="6" height="1" fill="#b8b8bc"/><rect x="546" y="259" width="6" height="1" fill="#a8a8ac"/><rect x="546" y="260" width="6" height="1" fill="#a0a098"/><g shape-rendering="auto"><path d="M548 279.5 L553 279.5 L557 283 L557 287 L553 290.5 L548 290.5 Z" fill="#b4b4b4" stroke="#000" stroke-width="1"/><path d="M548.5 280.7 L552.6 280.7 L555.8 283.5 L555.8 286.5 L552.6 289.3 L548.5 289.3" fill="none" stroke="#fff" stroke-width="1.2"/></g><rect x="546" y="282" width="6" height="1" fill="#b8b8b0"/><rect x="546" y="283" width="6" height="1" fill="#dcdcdc"/><rect x="546" y="284" width="6" height="1" fill="#c8c8cc"/><rect x="546" y="285" width="6" height="1" fill="#b8b8bc"/><rect x="546" y="286" width="6" height="1" fill="#a8a8ac"/><rect x="546" y="287" width="6" height="1" fill="#a0a098"/><rect x="159" y="288" width="1" height="42" fill="#000000"/><rect x="160" y="288" width="1" height="42" fill="#b8b8b0"/><rect x="161" y="288" width="1" height="42" fill="#dcdcdc"/><rect x="162" y="288" width="1" height="42" fill="#c8c8cc"/><rect x="163" y="288" width="1" height="42" fill="#b8b8bc"/><rect x="164" y="288" width="1" height="42" fill="#a8a8ac"/><rect x="165" y="288" width="1" height="42" fill="#a0a098"/><rect x="166" y="288" width="1" height="42" fill="#000000"/><line x1="161.5" y1="288" x2="161.5" y2="330" stroke="#f4f4f4" stroke-width="1" stroke-dasharray="1 2 2 3 1 4"/><rect x="159" y="330" width="1" height="10" fill="#d0906c"/><rect x="166" y="330" width="1" height="10" fill="#d0906c"/><rect x="159" y="340" width="1" height="32" fill="#000000"/><rect x="160" y="340" width="1" height="32" fill="#b8b8b0"/><rect x="161" y="340" width="1" height="32" fill="#dcdcdc"/><rect x="162" y="340" width="1" height="32" fill="#c8c8cc"/><rect x="163" y="340" width="1" height="32" fill="#b8b8bc"/><rect x="164" y="340" width="1" height="32" fill="#a8a8ac"/><rect x="165" y="340" width="1" height="32" fill="#a0a098"/><rect x="166" y="340" width="1" height="32" fill="#000000"/><line x1="161.5" y1="340" x2="161.5" y2="372" stroke="#f4f4f4" stroke-width="1" stroke-dasharray="1 2 2 3 1 4"/><rect x="159" y="388" width="1" height="132" fill="#000000"/><rect x="160" y="388" width="1" height="132" fill="#b8b8b0"/><rect x="161" y="388" width="1" height="132" fill="#dcdcdc"/><rect x="162" y="388" width="1" height="132" fill="#c8c8cc"/><rect x="163" y="388" width="1" height="132" fill="#b8b8bc"/><rect x="164" y="388" width="1" height="132" fill="#a8a8ac"/><rect x="165" y="388" width="1" height="132" fill="#a0a098"/><rect x="166" y="388" width="1" height="132" fill="#000000"/><line x1="161.5" y1="388" x2="161.5" y2="520" stroke="#f4f4f4" stroke-width="1" stroke-dasharray="1 2 2 3 1 4"/><rect x="159" y="520" width="1" height="11" fill="#d0906c"/><rect x="166" y="520" width="1" height="11" fill="#d0906c"/><rect x="159" y="531" width="1" height="52" fill="#000000"/><rect x="160" y="531" width="1" height="52" fill="#b8b8b0"/><rect x="161" y="531" width="1" height="52" fill="#dcdcdc"/><rect x="162" y="531" width="1" height="52" fill="#c8c8cc"/><rect x="163" y="531" width="1" height="52" fill="#b8b8bc"/><rect x="164" y="531" width="1" height="52" fill="#a8a8ac"/><rect x="165" y="531" width="1" height="52" fill="#a0a098"/><rect x="166" y="531" width="1" height="52" fill="#000000"/><line x1="161.5" y1="531" x2="161.5" y2="583" stroke="#f4f4f4" stroke-width="1" stroke-dasharray="1 2 2 3 1 4"/><rect x="158" y="583" width="10" height="1" fill="#000000"/><rect x="159" y="582" width="8" height="1" fill="#707070"/><g shape-rendering="auto"><path d="M157 292 L157 287 L162.5 282 L163.5 282 L169 287 L169 292" fill="none" stroke="#00ffff" stroke-width="2"/><path d="M158.5 292.5 L158.5 287.5 L163 283.5 L167.5 287.5 L167.5 292.5 Z" fill="#b8b8b8" stroke="#000" stroke-width="1"/><path d="M159.7 292 L159.7 288 L163 285 L166.3 288 L166.3 292" fill="none" stroke="#fff" stroke-width="1.2"/></g><rect x="160" y="290" width="1" height="7" fill="#b8b8b0"/><rect x="161" y="290" width="1" height="7" fill="#dcdcdc"/><rect x="162" y="290" width="1" height="7" fill="#c8c8cc"/><rect x="163" y="290" width="1" height="7" fill="#b8b8bc"/><rect x="164" y="290" width="1" height="7" fill="#a8a8ac"/><rect x="165" y="290" width="1" height="7" fill="#a0a098"/><rect x="158" y="373" width="10" height="1" fill="#000000"/><rect x="158" y="374" width="10" height="1" fill="#000000"/><rect x="159" y="375" width="8" height="1" fill="#000000"/><rect x="160" y="376" width="6" height="1" fill="#000000"/><rect x="160" y="377" width="6" height="1" fill="#000000"/><rect x="161" y="378" width="4" height="1" fill="#000000"/><rect x="162" y="379" width="3" height="1" fill="#000000"/><rect x="162" y="380" width="3" height="1" fill="#000000"/><rect x="161" y="381" width="4" height="1" fill="#000000"/><rect x="160" y="382" width="6" height="1" fill="#000000"/><rect x="160" y="383" width="6" height="1" fill="#000000"/><rect x="159" y="384" width="8" height="1" fill="#000000"/><rect x="158" y="385" width="10" height="1" fill="#000000"/><rect x="158" y="386" width="10" height="1" fill="#000000"/><rect x="165" y="379" width="7" height="2" fill="#000000"/><rect x="171" y="375" width="8" height="10" fill="#000000"/><rect x="172" y="376" width="6" height="8" fill="#c0c0c0"/><line x1="173.5" y1="382.5" x2="176.5" y2="377.5" stroke="#000000" stroke-width="1"/><rect x="160" y="584" width="1" height="39" fill="#606060"/><rect x="161" y="584" width="1" height="39" fill="#f0f0f0"/><rect x="162" y="584" width="1" height="39" fill="#dcdcdc"/><rect x="163" y="584" width="1" height="39" fill="#c8c8c8"/><rect x="164" y="584" width="1" height="39" fill="#b0b0b0"/><rect x="165" y="584" width="1" height="39" fill="#606060"/><rect x="165" y="563" width="25" height="1" fill="#505050"/><rect x="165" y="564" width="25" height="1" fill="#c8c8c8"/><rect x="165" y="565" width="25" height="1" fill="#ececec"/><rect x="165" y="566" width="25" height="1" fill="#dcdcdc"/><rect x="165" y="567" width="25" height="1" fill="#cccccc"/><rect x="165" y="568" width="25" height="1" fill="#b8b8b8"/><rect x="165" y="569" width="25" height="1" fill="#a4a4a4"/><rect x="165" y="570" width="25" height="1" fill="#505050"/><rect x="165" y="620" width="25" height="1" fill="#505050"/><rect x="165" y="621" width="25" height="1" fill="#c8c8c8"/><rect x="165" y="622" width="25" height="1" fill="#ececec"/><rect x="165" y="623" width="25" height="1" fill="#dcdcdc"/><rect x="165" y="624" width="25" height="1" fill="#cccccc"/><rect x="165" y="625" width="25" height="1" fill="#b8b8b8"/><rect x="165" y="626" width="25" height="1" fill="#a4a4a4"/><rect x="165" y="627" width="25" height="1" fill="#505050"/><rect x="191" y="563" width="10" height="1" fill="#d8d488"/><rect x="191" y="570" width="10" height="1" fill="#d8d488"/><rect x="191" y="620" width="10" height="1" fill="#d8d488"/><rect x="191" y="627" width="10" height="1" fill="#d8d488"/><g shape-rendering="auto"><circle cx="163.5" cy="623.5" r="3.5" fill="#e8e8e8" stroke="#000" stroke-width="1"/><circle cx="163.5" cy="623.5" r="1.6" fill="#fff" stroke="#808080" stroke-width="0.6"/></g><rect x="160" y="564" width="7" height="6" fill="#d8d8d8"/><rect x="160" y="564" width="1" height="6" fill="#ffffff"/><rect x="166" y="564" width="1" height="6" fill="#ffffff"/><rect x="161" y="207" width="5" height="11" fill="#000000"/><rect x="162" y="208" width="1" height="9" fill="#d8d8d8"/><rect x="164" y="208" width="1" height="9" fill="#d8d8d8"/><rect x="163" y="208" width="1" height="9" fill="#505050"/><rect x="166" y="210" width="9" height="6" fill="#c8c8c8"/><rect x="166" y="209" width="9" height="1" fill="#606060"/><rect x="166" y="216" width="9" height="1" fill="#606060"/><g shape-rendering="auto"><rect x="174" y="206.5" width="2.5" height="13" fill="#b0b0b0" stroke="#000" stroke-width="0.8"/><ellipse cx="180.5" cy="213" rx="5.5" ry="6.3" fill="#9c9c9c" stroke="#303030" stroke-width="1"/><ellipse cx="181" cy="213" rx="3.2" ry="4" fill="#d4d4d4"/></g><rect x="185" y="209" width="4" height="8" fill="#202020"/><rect x="189" y="209" width="14" height="1" fill="#000000"/><rect x="189" y="210" width="14" height="1" fill="#e0e0e0"/><rect x="189" y="211" width="14" height="1" fill="#ffffff"/><rect x="189" y="212" width="14" height="1" fill="#f4f4f4"/><rect x="189" y="213" width="14" height="1" fill="#e0e0e0"/><rect x="189" y="214" width="14" height="1" fill="#c8c8c8"/><rect x="189" y="215" width="14" height="1" fill="#b0b0b0"/><rect x="189" y="216" width="14" height="1" fill="#000000"/><rect x="198" y="207" width="3" height="12" fill="#000000"/><rect x="199" y="208" width="1" height="10" fill="#ffffff"/><rect x="161" y="252" width="5" height="11" fill="#000000"/><rect x="162" y="253" width="1" height="9" fill="#d8d8d8"/><rect x="164" y="253" width="1" height="9" fill="#d8d8d8"/><rect x="163" y="253" width="1" height="9" fill="#505050"/><rect x="166" y="255" width="9" height="6" fill="#c8c8c8"/><rect x="166" y="254" width="9" height="1" fill="#606060"/><rect x="166" y="261" width="9" height="1" fill="#606060"/><g shape-rendering="auto"><rect x="174" y="251.5" width="2.5" height="13" fill="#b0b0b0" stroke="#000" stroke-width="0.8"/><ellipse cx="180.5" cy="258" rx="5.5" ry="6.3" fill="#9c9c9c" stroke="#303030" stroke-width="1"/><ellipse cx="181" cy="258" rx="3.2" ry="4" fill="#d4d4d4"/></g><rect x="185" y="254" width="4" height="8" fill="#202020"/><rect x="189" y="254" width="14" height="1" fill="#000000"/><rect x="189" y="255" width="14" height="1" fill="#e0e0e0"/><rect x="189" y="256" width="14" height="1" fill="#ffffff"/><rect x="189" y="257" width="14" height="1" fill="#f4f4f4"/><rect x="189" y="258" width="14" height="1" fill="#e0e0e0"/><rect x="189" y="259" width="14" height="1" fill="#c8c8c8"/><rect x="189" y="260" width="14" height="1" fill="#b0b0b0"/><rect x="189" y="261" width="14" height="1" fill="#000000"/><rect x="198" y="252" width="3" height="12" fill="#000000"/><rect x="199" y="253" width="1" height="10" fill="#ffffff"/><rect x="167" y="195" width="22" height="4" fill="#000000"/><rect x="167" y="273" width="22" height="4" fill="#000000"/><rect x="167" y="195" width="4" height="82" fill="#000000"/><rect x="168" y="196" width="2" height="80" fill="#c0c0c0"/><rect x="168" y="196" width="21" height="2" fill="#c0c0c0"/><rect x="168" y="274" width="21" height="2" fill="#c0c0c0"/><g shape-rendering="auto"><circle cx="147.5" cy="213.5" r="12" fill="#fff000" stroke="#000" stroke-width="1.2"/><line x1="155.35" y1="215.06" x2="159.27" y2="215.84" stroke="#000" stroke-width="1"/><line x1="154.15" y1="217.94" x2="157.48" y2="220.17" stroke="#000" stroke-width="1"/><line x1="151.94" y1="220.15" x2="154.17" y2="223.48" stroke="#000" stroke-width="1"/><line x1="149.06" y1="221.35" x2="149.84" y2="225.27" stroke="#000" stroke-width="1"/><line x1="145.94" y1="221.35" x2="145.16" y2="225.27" stroke="#000" stroke-width="1"/><line x1="143.06" y1="220.15" x2="140.83" y2="223.48" stroke="#000" stroke-width="1"/><line x1="140.85" y1="217.94" x2="137.52" y2="220.17" stroke="#000" stroke-width="1"/><line x1="139.65" y1="215.06" x2="135.73" y2="215.84" stroke="#000" stroke-width="1"/><line x1="139.65" y1="211.94" x2="135.73" y2="211.16" stroke="#000" stroke-width="1"/><line x1="140.85" y1="209.06" x2="137.52" y2="206.83" stroke="#000" stroke-width="1"/><line x1="143.06" y1="206.85" x2="140.83" y2="203.52" stroke="#000" stroke-width="1"/><line x1="145.94" y1="205.65" x2="145.16" y2="201.73" stroke="#000" stroke-width="1"/><line x1="149.06" y1="205.65" x2="149.84" y2="201.73" stroke="#000" stroke-width="1"/><line x1="151.94" y1="206.85" x2="154.17" y2="203.52" stroke="#000" stroke-width="1"/><line x1="154.15" y1="209.06" x2="157.48" y2="206.83" stroke="#000" stroke-width="1"/><line x1="155.35" y1="211.94" x2="159.27" y2="211.16" stroke="#000" stroke-width="1"/><circle cx="147.5" cy="213.5" r="7.8" fill="#fff000" stroke="#000" stroke-width="1.1"/><circle cx="147.5" cy="213.5" r="5.6" fill="#101090" stroke="#000" stroke-width="1.4"/><path d="M144.5 210.5 H150.5 M143.0 212.5 H152.0 M143.0 214.5 H146.0 M149.0 214.5 H152.0 M144.5 216.5 H150.5" stroke="#ffffff" stroke-width="1" shape-rendering="crispEdges"/></g><g shape-rendering="auto"><circle cx="147.5" cy="258.5" r="12" fill="#fff000" stroke="#000" stroke-width="1.2"/><line x1="155.35" y1="260.06" x2="159.27" y2="260.84" stroke="#000" stroke-width="1"/><line x1="154.15" y1="262.94" x2="157.48" y2="265.17" stroke="#000" stroke-width="1"/><line x1="151.94" y1="265.15" x2="154.17" y2="268.48" stroke="#000" stroke-width="1"/><line x1="149.06" y1="266.35" x2="149.84" y2="270.27" stroke="#000" stroke-width="1"/><line x1="145.94" y1="266.35" x2="145.16" y2="270.27" stroke="#000" stroke-width="1"/><line x1="143.06" y1="265.15" x2="140.83" y2="268.48" stroke="#000" stroke-width="1"/><line x1="140.85" y1="262.94" x2="137.52" y2="265.17" stroke="#000" stroke-width="1"/><line x1="139.65" y1="260.06" x2="135.73" y2="260.84" stroke="#000" stroke-width="1"/><line x1="139.65" y1="256.94" x2="135.73" y2="256.16" stroke="#000" stroke-width="1"/><line x1="140.85" y1="254.06" x2="137.52" y2="251.83" stroke="#000" stroke-width="1"/><line x1="143.06" y1="251.85" x2="140.83" y2="248.52" stroke="#000" stroke-width="1"/><line x1="145.94" y1="250.65" x2="145.16" y2="246.73" stroke="#000" stroke-width="1"/><line x1="149.06" y1="250.65" x2="149.84" y2="246.73" stroke="#000" stroke-width="1"/><line x1="151.94" y1="251.85" x2="154.17" y2="248.52" stroke="#000" stroke-width="1"/><line x1="154.15" y1="254.06" x2="157.48" y2="251.83" stroke="#000" stroke-width="1"/><line x1="155.35" y1="256.94" x2="159.27" y2="256.16" stroke="#000" stroke-width="1"/><circle cx="147.5" cy="258.5" r="7.8" fill="#fff000" stroke="#000" stroke-width="1.1"/><circle cx="147.5" cy="258.5" r="5.6" fill="#101090" stroke="#000" stroke-width="1.4"/><path d="M144.5 255.5 H150.5 M143.0 257.5 H152.0 M143.0 259.5 H146.0 M149.0 259.5 H152.0 M144.5 261.5 H150.5" stroke="#ffffff" stroke-width="1" shape-rendering="crispEdges"/></g><rect x="230" y="207" width="3" height="12" fill="#000000"/><rect x="231" y="208" width="1" height="10" fill="#ffffff"/><rect x="230" y="252" width="3" height="12" fill="#000000"/><rect x="231" y="253" width="1" height="10" fill="#ffffff"/><rect x="239" y="561" width="5" height="11" fill="#000000"/><rect x="240" y="562" width="1" height="9" fill="#d8d8d8"/><rect x="242" y="562" width="1" height="9" fill="#d8d8d8"/><rect x="241" y="562" width="1" height="9" fill="#505050"/><rect x="230" y="564" width="9" height="6" fill="#c8c8c8"/><rect x="230" y="563" width="9" height="1" fill="#606060"/><rect x="230" y="570" width="9" height="1" fill="#606060"/><g shape-rendering="auto"><rect x="228" y="560.5" width="2.5" height="13" fill="#b0b0b0" stroke="#000" stroke-width="0.8"/><ellipse cx="223.5" cy="567" rx="5.5" ry="6.3" fill="#9c9c9c" stroke="#303030" stroke-width="1"/><ellipse cx="223" cy="567" rx="3.2" ry="4" fill="#d4d4d4"/></g><rect x="216" y="563" width="4" height="8" fill="#202020"/><rect x="202" y="563" width="14" height="1" fill="#000000"/><rect x="202" y="564" width="14" height="1" fill="#e0e0e0"/><rect x="202" y="565" width="14" height="1" fill="#ffffff"/><rect x="202" y="566" width="14" height="1" fill="#f4f4f4"/><rect x="202" y="567" width="14" height="1" fill="#e0e0e0"/><rect x="202" y="568" width="14" height="1" fill="#c8c8c8"/><rect x="202" y="569" width="14" height="1" fill="#b0b0b0"/><rect x="202" y="570" width="14" height="1" fill="#000000"/><rect x="204" y="561" width="3" height="12" fill="#000000"/><rect x="205" y="562" width="1" height="10" fill="#ffffff"/><rect x="239" y="618" width="5" height="11" fill="#000000"/><rect x="240" y="619" width="1" height="9" fill="#d8d8d8"/><rect x="242" y="619" width="1" height="9" fill="#d8d8d8"/><rect x="241" y="619" width="1" height="9" fill="#505050"/><rect x="230" y="621" width="9" height="6" fill="#c8c8c8"/><rect x="230" y="620" width="9" height="1" fill="#606060"/><rect x="230" y="627" width="9" height="1" fill="#606060"/><g shape-rendering="auto"><rect x="228" y="617.5" width="2.5" height="13" fill="#b0b0b0" stroke="#000" stroke-width="0.8"/><ellipse cx="223.5" cy="624" rx="5.5" ry="6.3" fill="#9c9c9c" stroke="#303030" stroke-width="1"/><ellipse cx="223" cy="624" rx="3.2" ry="4" fill="#d4d4d4"/></g><rect x="216" y="620" width="4" height="8" fill="#202020"/><rect x="202" y="620" width="14" height="1" fill="#000000"/><rect x="202" y="621" width="14" height="1" fill="#e0e0e0"/><rect x="202" y="622" width="14" height="1" fill="#ffffff"/><rect x="202" y="623" width="14" height="1" fill="#f4f4f4"/><rect x="202" y="624" width="14" height="1" fill="#e0e0e0"/><rect x="202" y="625" width="14" height="1" fill="#c8c8c8"/><rect x="202" y="626" width="14" height="1" fill="#b0b0b0"/><rect x="202" y="627" width="14" height="1" fill="#000000"/><rect x="204" y="618" width="3" height="12" fill="#000000"/><rect x="205" y="619" width="1" height="10" fill="#ffffff"/><rect x="217" y="549" width="22" height="4" fill="#000000"/><rect x="217" y="636" width="22" height="4" fill="#000000"/><rect x="235" y="549" width="4" height="91" fill="#000000"/><rect x="236" y="550" width="2" height="89" fill="#c0c0c0"/><rect x="217" y="550" width="21" height="2" fill="#c0c0c0"/><rect x="217" y="637" width="21" height="2" fill="#c0c0c0"/><g shape-rendering="auto"><circle cx="257.5" cy="567.5" r="12" fill="#fff000" stroke="#000" stroke-width="1.2"/><line x1="265.35" y1="569.06" x2="269.27" y2="569.84" stroke="#000" stroke-width="1"/><line x1="264.15" y1="571.94" x2="267.48" y2="574.17" stroke="#000" stroke-width="1"/><line x1="261.94" y1="574.15" x2="264.17" y2="577.48" stroke="#000" stroke-width="1"/><line x1="259.06" y1="575.35" x2="259.84" y2="579.27" stroke="#000" stroke-width="1"/><line x1="255.94" y1="575.35" x2="255.16" y2="579.27" stroke="#000" stroke-width="1"/><line x1="253.06" y1="574.15" x2="250.83" y2="577.48" stroke="#000" stroke-width="1"/><line x1="250.85" y1="571.94" x2="247.52" y2="574.17" stroke="#000" stroke-width="1"/><line x1="249.65" y1="569.06" x2="245.73" y2="569.84" stroke="#000" stroke-width="1"/><line x1="249.65" y1="565.94" x2="245.73" y2="565.16" stroke="#000" stroke-width="1"/><line x1="250.85" y1="563.06" x2="247.52" y2="560.83" stroke="#000" stroke-width="1"/><line x1="253.06" y1="560.85" x2="250.83" y2="557.52" stroke="#000" stroke-width="1"/><line x1="255.94" y1="559.65" x2="255.16" y2="555.73" stroke="#000" stroke-width="1"/><line x1="259.06" y1="559.65" x2="259.84" y2="555.73" stroke="#000" stroke-width="1"/><line x1="261.94" y1="560.85" x2="264.17" y2="557.52" stroke="#000" stroke-width="1"/><line x1="264.15" y1="563.06" x2="267.48" y2="560.83" stroke="#000" stroke-width="1"/><line x1="265.35" y1="565.94" x2="269.27" y2="565.16" stroke="#000" stroke-width="1"/><circle cx="257.5" cy="567.5" r="7.8" fill="#fff000" stroke="#000" stroke-width="1.1"/><circle cx="257.5" cy="567.5" r="5.6" fill="#101090" stroke="#000" stroke-width="1.4"/><path d="M254.5 564.5 H260.5 M253.0 566.5 H262.0 M253.0 568.5 H256.0 M259.0 568.5 H262.0 M254.5 570.5 H260.5" stroke="#ffffff" stroke-width="1" shape-rendering="crispEdges"/></g><g shape-rendering="auto"><circle cx="257.5" cy="624.5" r="12" fill="#fff000" stroke="#000" stroke-width="1.2"/><line x1="265.35" y1="626.06" x2="269.27" y2="626.84" stroke="#000" stroke-width="1"/><line x1="264.15" y1="628.94" x2="267.48" y2="631.17" stroke="#000" stroke-width="1"/><line x1="261.94" y1="631.15" x2="264.17" y2="634.48" stroke="#000" stroke-width="1"/><line x1="259.06" y1="632.35" x2="259.84" y2="636.27" stroke="#000" stroke-width="1"/><line x1="255.94" y1="632.35" x2="255.16" y2="636.27" stroke="#000" stroke-width="1"/><line x1="253.06" y1="631.15" x2="250.83" y2="634.48" stroke="#000" stroke-width="1"/><line x1="250.85" y1="628.94" x2="247.52" y2="631.17" stroke="#000" stroke-width="1"/><line x1="249.65" y1="626.06" x2="245.73" y2="626.84" stroke="#000" stroke-width="1"/><line x1="249.65" y1="622.94" x2="245.73" y2="622.16" stroke="#000" stroke-width="1"/><line x1="250.85" y1="620.06" x2="247.52" y2="617.83" stroke="#000" stroke-width="1"/><line x1="253.06" y1="617.85" x2="250.83" y2="614.52" stroke="#000" stroke-width="1"/><line x1="255.94" y1="616.65" x2="255.16" y2="612.73" stroke="#000" stroke-width="1"/><line x1="259.06" y1="616.65" x2="259.84" y2="612.73" stroke="#000" stroke-width="1"/><line x1="261.94" y1="617.85" x2="264.17" y2="614.52" stroke="#000" stroke-width="1"/><line x1="264.15" y1="620.06" x2="267.48" y2="617.83" stroke="#000" stroke-width="1"/><line x1="265.35" y1="622.94" x2="269.27" y2="622.16" stroke="#000" stroke-width="1"/><circle cx="257.5" cy="624.5" r="7.8" fill="#fff000" stroke="#000" stroke-width="1.1"/><circle cx="257.5" cy="624.5" r="5.6" fill="#101090" stroke="#000" stroke-width="1.4"/><path d="M254.5 621.5 H260.5 M253.0 623.5 H262.0 M253.0 625.5 H256.0 M259.0 625.5 H262.0 M254.5 627.5 H260.5" stroke="#ffffff" stroke-width="1" shape-rendering="crispEdges"/></g><rect x="170" y="561" width="3" height="12" fill="#000000"/><rect x="171" y="562" width="1" height="10" fill="#ffffff"/><rect x="170" y="618" width="3" height="12" fill="#000000"/><rect x="171" y="619" width="1" height="10" fill="#ffffff"/><g shape-rendering="auto"><path d="M124.5 191 H131.5 L136 195.5 V201.5 L131.5 206 H124.5 L120 201.5 V195.5 Z" fill="#f00000" stroke="#c00000" stroke-width="0.6"/></g><text x="128.3" y="201.2" font-family='"Liberation Sans",sans-serif' font-size="7.5" font-weight="bold" fill="#ffffff" text-anchor="middle" textLength="11.5" lengthAdjust="spacingAndGlyphs">OFF</text><g shape-rendering="auto"><path d="M124.5 271 H131.5 L136 275.5 V281.5 L131.5 286 H124.5 L120 281.5 V275.5 Z" fill="#f00000" stroke="#c00000" stroke-width="0.6"/></g><text x="128.3" y="281.2" font-family='"Liberation Sans",sans-serif' font-size="7.5" font-weight="bold" fill="#ffffff" text-anchor="middle" textLength="11.5" lengthAdjust="spacingAndGlyphs">OFF</text><g shape-rendering="auto"><path d="M273.5 543 H280.5 L285 547.5 V553.5 L280.5 558 H273.5 L269 553.5 V547.5 Z" fill="#f00000" stroke="#c00000" stroke-width="0.6"/></g><text x="277.3" y="553.2" font-family='"Liberation Sans",sans-serif' font-size="7.5" font-weight="bold" fill="#ffffff" text-anchor="middle" textLength="11.5" lengthAdjust="spacingAndGlyphs">OFF</text><text x="106" y="218" font-family='"Liberation Serif",serif' font-size="14" font-weight="bold" fill="#000000" textLength="23" lengthAdjust="spacingAndGlyphs">ΑΑ1</text><text x="106" y="263" font-family='"Liberation Serif",serif' font-size="14" font-weight="bold" fill="#000000" textLength="24" lengthAdjust="spacingAndGlyphs">ΑΑ2</text><text x="276" y="572" font-family='"Liberation Serif",serif' font-size="14" font-weight="bold" fill="#000000" textLength="23" lengthAdjust="spacingAndGlyphs">ΑΒ1</text><text x="276" y="629" font-family='"Liberation Serif",serif' font-size="14" font-weight="bold" fill="#000000" textLength="24" lengthAdjust="spacingAndGlyphs">ΑΒ2</text><text x="468" y="426" font-family='"Liberation Serif",serif' font-size="13" font-weight="bold" fill="#000000" textLength="23" lengthAdjust="spacingAndGlyphs">ΜΕ1</text><text x="41" y="358" font-family='"Liberation Sans",sans-serif' font-size="14" fill="#0000ff" textLength="112" lengthAdjust="spacing" stroke="#0000ff" stroke-width="0.55">Α/Σ ΑΝΥΨΩΣΗΣ</text><text x="537" y="198" font-family='"Liberation Sans",sans-serif' font-size="14" fill="#0000ff" textLength="78" lengthAdjust="spacing" stroke="#0000ff" stroke-width="0.55">ΕΣΧΑΡΩΣΗ</text><text x="200" y="481" font-family='"Liberation Sans",sans-serif' font-size="14" fill="#0000ff" textLength="156" lengthAdjust="spacing" stroke="#0000ff" stroke-width="0.55">Α/Σ ΒΟΘΡΟΛΥΜΑΤΩΝ</text><text x="700" y="418" font-family='"Liberation Sans",sans-serif' font-size="11" font-weight="bold" fill="#000000" text-anchor="middle" textLength="76" lengthAdjust="spacing">ΧΕΙΡΟΚΙΝΗΤΗ</text><text x="700" y="430" font-family='"Liberation Sans",sans-serif' font-size="11" font-weight="bold" fill="#000000" text-anchor="middle" textLength="46" lengthAdjust="spacing">ΕΣΧΑΡΑ</text><g shape-rendering="auto" transform="translate(483 394)"><path d="M4.5 6 V2 Q4.5 1 5.5 1 Q6.5 1 6.5 2 V1.2 Q6.5 0.3 7.5 0.3 Q8.5 0.3 8.5 1.2 V2 Q8.5 1 9.5 1 Q10.5 1 10.5 2 V3.2 Q10.5 2.5 11.5 2.5 Q12.5 2.5 12.5 3.5 V9 Q12.5 12.6 10.5 13 H5.5 L1 7.8 Q0.3 6.8 1.2 6.3 Q2 5.8 2.8 6.6 L4.5 8.5 Z" fill="#fff" stroke="#000" stroke-width="0.9" stroke-linejoin="round"/><path d="M6.5 2 V6.5 M8.5 2 V6.5 M10.5 3 V6.5" stroke="#000" stroke-width="0.8"/><path d="M4.5 13.6 H11.5" stroke="#0000ff" stroke-width="1.1"/></g><g shape-rendering="auto" transform="translate(319 178)"><path d="M4.5 6 V2 Q4.5 1 5.5 1 Q6.5 1 6.5 2 V1.2 Q6.5 0.3 7.5 0.3 Q8.5 0.3 8.5 1.2 V2 Q8.5 1 9.5 1 Q10.5 1 10.5 2 V3.2 Q10.5 2.5 11.5 2.5 Q12.5 2.5 12.5 3.5 V9 Q12.5 12.6 10.5 13 H5.5 L1 7.8 Q0.3 6.8 1.2 6.3 Q2 5.8 2.8 6.6 L4.5 8.5 Z" fill="#fff" stroke="#000" stroke-width="0.9" stroke-linejoin="round"/><path d="M6.5 2 V6.5 M8.5 2 V6.5 M10.5 3 V6.5" stroke="#000" stroke-width="0.8"/><path d="M4.5 13.6 H11.5" stroke="#0000ff" stroke-width="1.1"/></g><g shape-rendering="auto" transform="translate(414 540)"><path d="M4.5 6 V2 Q4.5 1 5.5 1 Q6.5 1 6.5 2 V1.2 Q6.5 0.3 7.5 0.3 Q8.5 0.3 8.5 1.2 V2 Q8.5 1 9.5 1 Q10.5 1 10.5 2 V3.2 Q10.5 2.5 11.5 2.5 Q12.5 2.5 12.5 3.5 V9 Q12.5 12.6 10.5 13 H5.5 L1 7.8 Q0.3 6.8 1.2 6.3 Q2 5.8 2.8 6.6 L4.5 8.5 Z" fill="#fff" stroke="#000" stroke-width="0.9" stroke-linejoin="round"/><path d="M6.5 2 V6.5 M8.5 2 V6.5 M10.5 3 V6.5" stroke="#000" stroke-width="0.8"/><path d="M4.5 13.6 H11.5" stroke="#0000ff" stroke-width="1.1"/></g><g shape-rendering="auto" transform="translate(270 600)"><path d="M4.5 6 V2 Q4.5 1 5.5 1 Q6.5 1 6.5 2 V1.2 Q6.5 0.3 7.5 0.3 Q8.5 0.3 8.5 1.2 V2 Q8.5 1 9.5 1 Q10.5 1 10.5 2 V3.2 Q10.5 2.5 11.5 2.5 Q12.5 2.5 12.5 3.5 V9 Q12.5 12.6 10.5 13 H5.5 L1 7.8 Q0.3 6.8 1.2 6.3 Q2 5.8 2.8 6.6 L4.5 8.5 Z" fill="#fff" stroke="#000" stroke-width="0.9" stroke-linejoin="round"/><path d="M6.5 2 V6.5 M8.5 2 V6.5 M10.5 3 V6.5" stroke="#000" stroke-width="0.8"/><path d="M4.5 13.6 H11.5" stroke="#0000ff" stroke-width="1.1"/></g><rect x="280" y="127" width="59" height="1" fill="#808080"/><rect x="280" y="127" width="1" height="72" fill="#808080"/><rect x="281" y="128" width="57" height="1" fill="#000000"/><rect x="281" y="128" width="1" height="70" fill="#000000"/><rect x="280" y="198" width="59" height="1" fill="#ffffff"/><rect x="338" y="127" width="1" height="72" fill="#ffffff"/><rect x="281" y="197" width="58" height="1" fill="#ffffff"/><rect x="337" y="128" width="1" height="71" fill="#ffffff"/><text x="289" y="148" font-family='"Liberation Serif",serif' font-size="19" font-weight="bold" fill="#ffffff" textLength="38" lengthAdjust="spacingAndGlyphs">ΑΠ1</text><text x="289" y="147" font-family='"Liberation Serif",serif' font-size="19" font-weight="bold" fill="#ffffff" textLength="38" lengthAdjust="spacingAndGlyphs">ΑΠ1</text><text x="290" y="148" font-family='"Liberation Serif",serif' font-size="19" font-weight="bold" fill="url(#rb)" textLength="38" lengthAdjust="spacingAndGlyphs">ΑΠ1</text><g shape-rendering="auto" transform="translate(295 158)"><g transform="rotate(31 10 18)"><rect x="4.5" y="9" width="11" height="18" rx="1.2" fill="#fff200" stroke="#000" stroke-width="1.1"/><path d="M8 14 V25 M11.5 14 V25" stroke="#909060" stroke-width="1" stroke-dasharray="1.5 1"/><rect x="5.2" y="24" width="9.6" height="2.4" fill="#f0f0e0"/><path d="M5 13.5 L5 9.6 L15 9.6 L15 13.5 L12 12 L8 12 Z" fill="#ffffff"/><rect x="10.5" y="6.2" width="4.3" height="4.6" rx="0.8" fill="#101010"/><rect x="4.5" y="9" width="11" height="18" rx="1.2" fill="none" stroke="#000" stroke-width="1.1"/></g><path d="M4 -1 L11 7 M6 -2 L12 6 M3 1 L9 6 M8 -2 L11 3 M5 3 L10 4" stroke="#ff00ff" stroke-width="1.1" stroke-dasharray="1.3 0.7"/></g><rect x="374" y="488" width="62" height="1" fill="#808080"/><rect x="374" y="488" width="1" height="73" fill="#808080"/><rect x="375" y="489" width="60" height="1" fill="#000000"/><rect x="375" y="489" width="1" height="71" fill="#000000"/><rect x="374" y="560" width="62" height="1" fill="#ffffff"/><rect x="435" y="488" width="1" height="73" fill="#ffffff"/><rect x="375" y="559" width="61" height="1" fill="#ffffff"/><rect x="434" y="489" width="1" height="72" fill="#ffffff"/><text x="384" y="509" font-family='"Liberation Serif",serif' font-size="19" font-weight="bold" fill="#ffffff" textLength="38" lengthAdjust="spacingAndGlyphs">ΑΠ2</text><text x="384" y="508" font-family='"Liberation Serif",serif' font-size="19" font-weight="bold" fill="#ffffff" textLength="38" lengthAdjust="spacingAndGlyphs">ΑΠ2</text><text x="385" y="509" font-family='"Liberation Serif",serif' font-size="19" font-weight="bold" fill="url(#rb)" textLength="38" lengthAdjust="spacingAndGlyphs">ΑΠ2</text><g shape-rendering="auto" transform="translate(389 519)"><g transform="rotate(31 10 18)"><rect x="4.5" y="9" width="11" height="18" rx="1.2" fill="#fff200" stroke="#000" stroke-width="1.1"/><path d="M8 14 V25 M11.5 14 V25" stroke="#909060" stroke-width="1" stroke-dasharray="1.5 1"/><rect x="5.2" y="24" width="9.6" height="2.4" fill="#f0f0e0"/><path d="M5 13.5 L5 9.6 L15 9.6 L15 13.5 L12 12 L8 12 Z" fill="#ffffff"/><rect x="10.5" y="6.2" width="4.3" height="4.6" rx="0.8" fill="#101010"/><rect x="4.5" y="9" width="11" height="18" rx="1.2" fill="none" stroke="#000" stroke-width="1.1"/></g><path d="M4 -1 L11 7 M6 -2 L12 6 M3 1 L9 6 M8 -2 L11 3 M5 3 L10 4" stroke="#ff00ff" stroke-width="1.1" stroke-dasharray="1.3 0.7"/></g><rect x="13" y="248" width="33" height="93" fill="#ffffff"/><rect x="13" y="248" width="1" height="92" fill="#808080"/><rect x="14" y="248" width="1" height="92" fill="#000000"/><rect x="15" y="249" width="1" height="91" fill="#808080"/><rect x="14" y="248" width="30" height="1" fill="#000000"/><rect x="15" y="249" width="29" height="1" fill="#808080"/><rect x="16" y="250" width="27" height="28" fill="#000000"/><rect x="15" y="278" width="29" height="1" fill="#808080"/><rect x="14" y="279" width="30" height="1" fill="#000000"/><rect x="15" y="280" width="29" height="1" fill="#808080"/><rect x="16" y="281" width="27" height="27" fill="#000000"/><rect x="15" y="308" width="29" height="1" fill="#808080"/><rect x="14" y="309" width="30" height="1" fill="#000000"/><rect x="15" y="310" width="29" height="1" fill="#808080"/><rect x="16" y="311" width="27" height="28" fill="#000000"/><rect x="15" y="339" width="29" height="1" fill="#808080"/><rect x="43" y="249" width="1" height="91" fill="#808080"/><rect x="365" y="616" width="33" height="93" fill="#ffffff"/><rect x="365" y="616" width="1" height="92" fill="#808080"/><rect x="366" y="616" width="1" height="92" fill="#000000"/><rect x="367" y="617" width="1" height="91" fill="#808080"/><rect x="366" y="616" width="30" height="1" fill="#000000"/><rect x="367" y="617" width="29" height="1" fill="#808080"/><rect x="368" y="618" width="27" height="28" fill="#000000"/><rect x="367" y="646" width="29" height="1" fill="#808080"/><rect x="366" y="647" width="30" height="1" fill="#000000"/><rect x="367" y="648" width="29" height="1" fill="#808080"/><rect x="368" y="649" width="27" height="27" fill="#000000"/><rect x="367" y="676" width="29" height="1" fill="#808080"/><rect x="366" y="677" width="30" height="1" fill="#000000"/><rect x="367" y="678" width="29" height="1" fill="#808080"/><rect x="368" y="679" width="27" height="28" fill="#000000"/><rect x="367" y="707" width="29" height="1" fill="#808080"/><rect x="395" y="617" width="1" height="91" fill="#808080"/><rect x="372" y="650" width="1" height="25" fill="#ff0000"/><rect x="384" y="650" width="1" height="25" fill="#ff0000"/><rect x="374" y="662" width="9" height="13" fill="#ff0000"/><path d="M386 662.5 L392 658 V667 Z" fill="#ff0000" shape-rendering="auto"/><rect x="372" y="680" width="1" height="25" fill="#ff0000"/><rect x="384" y="680" width="1" height="25" fill="#ff0000"/><rect x="374" y="700" width="9" height="5" fill="#ff0000"/><path d="M386 700.5 L392 696 V705 Z" fill="#ff0000" shape-rendering="auto"/><rect x="0" y="0" width="1024" height="23" fill="#000080"/><rect x="2" y="1" width="20" height="3" fill="#c0c0c0"/><rect x="2" y="4" width="20" height="3" fill="#c0c0c0"/><rect x="2" y="7" width="20" height="2" fill="#808000"/><rect x="2" y="9" width="20" height="1" fill="#000000"/><rect x="2" y="10" width="20" height="8" fill="#00ffff"/><rect x="2" y="18" width="20" height="1" fill="#000000"/><rect x="2" y="19" width="20" height="2" fill="#c0c0c0"/><rect x="2" y="4" width="1" height="15" fill="#000000"/><rect x="21" y="4" width="1" height="15" fill="#000000"/><rect x="4" y="5" width="1" height="1" fill="#000000"/><rect x="4" y="5" width="1" height="1" fill="#000000"/><rect x="6" y="4" width="1" height="3" fill="#000000"/><rect x="7" y="5" width="1" height="1" fill="#000000"/><rect x="9" y="5" width="4" height="1" fill="#000000"/><rect x="12" y="5" width="1" height="1" fill="#000080"/><rect x="14" y="4" width="1" height="1" fill="#000000"/><rect x="14" y="6" width="1" height="1" fill="#000000"/><rect x="15" y="5" width="2" height="1" fill="#000000"/><rect x="17" y="4" width="1" height="3" fill="#000000"/><rect x="19" y="5" width="1" height="1" fill="#000000"/><rect x="7" y="8" width="1" height="1" fill="#ffff00"/><rect x="11" y="8" width="1" height="1" fill="#ffff00"/><rect x="15" y="8" width="6" height="1" fill="#ffff00"/><text x="26" y="16" font-family='"Liberation Sans",sans-serif' font-size="14" font-weight="bold" fill="#ffffff" textLength="515" lengthAdjust="spacing">Εγκατάσταση Βιολογικού Καθαρισμού Αεροδρομίου Κω - [Εργα Εισόδου]</text><rect x="957" y="2" width="21" height="18" fill="#c0c0c0"/><rect x="957" y="19" width="21" height="1" fill="#000000"/><rect x="977" y="2" width="1" height="18" fill="#000000"/><rect x="957" y="2" width="20" height="1" fill="#ffffff"/><rect x="957" y="2" width="1" height="17" fill="#ffffff"/><rect x="958" y="18" width="19" height="1" fill="#808080"/><rect x="976" y="3" width="1" height="16" fill="#808080"/><rect x="978" y="2" width="21" height="18" fill="#c0c0c0"/><rect x="978" y="19" width="21" height="1" fill="#000000"/><rect x="998" y="2" width="1" height="18" fill="#000000"/><rect x="978" y="2" width="20" height="1" fill="#ffffff"/><rect x="978" y="2" width="1" height="17" fill="#ffffff"/><rect x="979" y="18" width="19" height="1" fill="#808080"/><rect x="997" y="3" width="1" height="16" fill="#808080"/><rect x="1001" y="2" width="21" height="18" fill="#c0c0c0"/><rect x="1001" y="19" width="21" height="1" fill="#000000"/><rect x="1021" y="2" width="1" height="18" fill="#000000"/><rect x="1001" y="2" width="20" height="1" fill="#ffffff"/><rect x="1001" y="2" width="1" height="17" fill="#ffffff"/><rect x="1002" y="18" width="19" height="1" fill="#808080"/><rect x="1020" y="3" width="1" height="16" fill="#808080"/><rect x="962" y="15" width="8" height="2" fill="#000000"/><rect x="985" y="6" width="9" height="1" fill="#000000"/><rect x="985" y="12" width="9" height="1" fill="#000000"/><rect x="985" y="6" width="1" height="7" fill="#000000"/><rect x="993" y="6" width="1" height="7" fill="#000000"/><rect x="985" y="7" width="9" height="1" fill="#000000"/><rect x="982" y="10" width="9" height="7" fill="#c0c0c0"/><rect x="982" y="10" width="9" height="1" fill="#000000"/><rect x="982" y="16" width="9" height="1" fill="#000000"/><rect x="982" y="10" width="1" height="7" fill="#000000"/><rect x="990" y="10" width="1" height="7" fill="#000000"/><rect x="982" y="11" width="9" height="1" fill="#000000"/><rect x="1007" y="7" width="2" height="1" fill="#000000"/><rect x="1015" y="7" width="2" height="1" fill="#000000"/><rect x="1008" y="8" width="2" height="1" fill="#000000"/><rect x="1014" y="8" width="2" height="1" fill="#000000"/><rect x="1009" y="9" width="2" height="1" fill="#000000"/><rect x="1013" y="9" width="2" height="1" fill="#000000"/><rect x="1010" y="10" width="2" height="1" fill="#000000"/><rect x="1012" y="10" width="2" height="1" fill="#000000"/><rect x="1011" y="11" width="2" height="1" fill="#000000"/><rect x="1011" y="11" width="2" height="1" fill="#000000"/><rect x="1012" y="12" width="2" height="1" fill="#000000"/><rect x="1010" y="12" width="2" height="1" fill="#000000"/><rect x="1013" y="13" width="2" height="1" fill="#000000"/><rect x="1009" y="13" width="2" height="1" fill="#000000"/><rect x="1014" y="14" width="2" height="1" fill="#000000"/><rect x="1008" y="14" width="2" height="1" fill="#000000"/><rect x="1015" y="15" width="2" height="1" fill="#000000"/><rect x="1007" y="15" width="2" height="1" fill="#000000"/><rect x="0" y="23" width="1024" height="20" fill="#c0c0c0"/><rect x="0" y="43" width="1024" height="1" fill="#808080"/><rect x="0" y="44" width="1024" height="1" fill="#ffffff"/><text x="30" y="37" font-family='"Liberation Sans",sans-serif' font-size="14" font-weight="bold" fill="#000000" textLength="81" lengthAdjust="spacing">Πρόγραμμα</text><text x="130" y="37" font-family='"Liberation Sans",sans-serif' font-size="14" font-weight="bold" fill="#000000" textLength="93" lengthAdjust="spacing">Διαγράμματα</text><text x="243" y="37" font-family='"Liberation Sans",sans-serif' font-size="14" font-weight="bold" fill="#000000" textLength="89" lengthAdjust="spacing">Λειτουργίες</text><text x="352" y="37" font-family='"Liberation Sans",sans-serif' font-size="14" font-weight="bold" fill="#000000" textLength="73" lengthAdjust="spacing">Παράθυρα</text><text x="444" y="37" font-family='"Liberation Sans",sans-serif' font-size="14" font-weight="bold" fill="#000000" textLength="57" lengthAdjust="spacing">Βοήθεια</text><g shape-rendering="auto"><path d="M5 41 V36.5 L11 32.5 H15.5 V41 H12 V37.5 H9.5 V41 Z" fill="#909090"/><path d="M5 36 L11.5 32 H16" fill="none" stroke="#000" stroke-width="1" stroke-dasharray="2 1"/><rect x="16" y="33" width="1.6" height="8" fill="#a09000"/><path d="M17.8 33 V41" stroke="#000" stroke-width="0.9" stroke-dasharray="2 1"/><path d="M16.5 25 Q13 27.5 13 30.5 Q13.5 33 16 33 Q19.5 33 19 29.5 Q18.5 27.5 17.5 27 Q17.5 26 16.5 25 Z" fill="#ff2000" stroke="#000" stroke-width="0.7" stroke-dasharray="1.5 1.5"/><path d="M15.8 27.5 Q14.5 29.5 15.3 31.2 Q16.5 31.5 16.5 30 Z" fill="#ffff00"/><rect x="8.5" y="38" width="1.5" height="2.5" fill="#00a0a0"/></g><rect x="972" y="26" width="16" height="14" fill="#c0c0c0"/><rect x="972" y="39" width="16" height="1" fill="#000000"/><rect x="987" y="26" width="1" height="14" fill="#000000"/><rect x="972" y="26" width="15" height="1" fill="#ffffff"/><rect x="972" y="26" width="1" height="13" fill="#ffffff"/><rect x="973" y="38" width="14" height="1" fill="#808080"/><rect x="986" y="27" width="1" height="12" fill="#808080"/><rect x="988" y="26" width="16" height="14" fill="#c0c0c0"/><rect x="988" y="39" width="16" height="1" fill="#000000"/><rect x="1003" y="26" width="1" height="14" fill="#000000"/><rect x="988" y="26" width="15" height="1" fill="#ffffff"/><rect x="988" y="26" width="1" height="13" fill="#ffffff"/><rect x="989" y="38" width="14" height="1" fill="#808080"/><rect x="1002" y="27" width="1" height="12" fill="#808080"/><rect x="1006" y="26" width="16" height="14" fill="#c0c0c0"/><rect x="1006" y="39" width="16" height="1" fill="#000000"/><rect x="1021" y="26" width="1" height="14" fill="#000000"/><rect x="1006" y="26" width="15" height="1" fill="#ffffff"/><rect x="1006" y="26" width="1" height="13" fill="#ffffff"/><rect x="1007" y="38" width="14" height="1" fill="#808080"/><rect x="1020" y="27" width="1" height="12" fill="#808080"/><rect x="976" y="35" width="6" height="2" fill="#000000"/><rect x="993" y="29" width="6" height="1" fill="#000000"/><rect x="993" y="33" width="6" height="1" fill="#000000"/><rect x="993" y="29" width="1" height="5" fill="#000000"/><rect x="998" y="29" width="1" height="5" fill="#000000"/><rect x="993" y="30" width="6" height="1" fill="#000000"/><rect x="991" y="32" width="6" height="5" fill="#c0c0c0"/><rect x="991" y="32" width="6" height="1" fill="#000000"/><rect x="991" y="36" width="6" height="1" fill="#000000"/><rect x="991" y="32" width="1" height="5" fill="#000000"/><rect x="996" y="32" width="1" height="5" fill="#000000"/><rect x="991" y="33" width="6" height="1" fill="#000000"/><rect x="1010" y="30" width="2" height="1" fill="#000000"/><rect x="1017" y="30" width="2" height="1" fill="#000000"/><rect x="1011" y="31" width="2" height="1" fill="#000000"/><rect x="1016" y="31" width="2" height="1" fill="#000000"/><rect x="1012" y="32" width="2" height="1" fill="#000000"/><rect x="1015" y="32" width="2" height="1" fill="#000000"/><rect x="1013" y="33" width="2" height="1" fill="#000000"/><rect x="1014" y="33" width="2" height="1" fill="#000000"/><rect x="1014" y="34" width="2" height="1" fill="#000000"/><rect x="1013" y="34" width="2" height="1" fill="#000000"/><rect x="1015" y="35" width="2" height="1" fill="#000000"/><rect x="1012" y="35" width="2" height="1" fill="#000000"/><rect x="1016" y="36" width="2" height="1" fill="#000000"/><rect x="1011" y="36" width="2" height="1" fill="#000000"/><rect x="0" y="45" width="1" height="36" fill="#808080"/><rect x="1" y="45" width="1" height="35" fill="#ffffff"/><rect x="0" y="79" width="1024" height="1" fill="#808080"/><rect x="0" y="80" width="1024" height="1" fill="#ffffff"/><rect x="0" y="81" width="1024" height="1" fill="#808080"/><rect x="8" y="46" width="32" height="32" fill="#c0c0c0"/><rect x="8" y="77" width="32" height="1" fill="#000000"/><rect x="39" y="46" width="1" height="32" fill="#000000"/><rect x="8" y="46" width="31" height="1" fill="#ffffff"/><rect x="8" y="46" width="1" height="31" fill="#ffffff"/><rect x="9" y="76" width="30" height="1" fill="#808080"/><rect x="38" y="47" width="1" height="30" fill="#808080"/><rect x="70" y="46" width="32" height="32" fill="#c0c0c0"/><rect x="70" y="77" width="32" height="1" fill="#000000"/><rect x="101" y="46" width="1" height="32" fill="#000000"/><rect x="70" y="46" width="31" height="1" fill="#ffffff"/><rect x="70" y="46" width="1" height="31" fill="#ffffff"/><rect x="71" y="76" width="30" height="1" fill="#808080"/><rect x="100" y="47" width="1" height="30" fill="#808080"/><rect x="103" y="46" width="32" height="32" fill="#c0c0c0"/><rect x="103" y="77" width="32" height="1" fill="#000000"/><rect x="134" y="46" width="1" height="32" fill="#000000"/><rect x="103" y="46" width="31" height="1" fill="#ffffff"/><rect x="103" y="46" width="1" height="31" fill="#ffffff"/><rect x="104" y="76" width="30" height="1" fill="#808080"/><rect x="133" y="47" width="1" height="30" fill="#808080"/><rect x="136" y="46" width="32" height="32" fill="#c0c0c0"/><rect x="136" y="77" width="32" height="1" fill="#000000"/><rect x="167" y="46" width="1" height="32" fill="#000000"/><rect x="136" y="46" width="31" height="1" fill="#ffffff"/><rect x="136" y="46" width="1" height="31" fill="#ffffff"/><rect x="137" y="76" width="30" height="1" fill="#808080"/><rect x="166" y="47" width="1" height="30" fill="#808080"/><rect x="169" y="46" width="32" height="32" fill="#c0c0c0"/><rect x="169" y="77" width="32" height="1" fill="#000000"/><rect x="200" y="46" width="1" height="32" fill="#000000"/><rect x="169" y="46" width="31" height="1" fill="#ffffff"/><rect x="169" y="46" width="1" height="31" fill="#ffffff"/><rect x="170" y="76" width="30" height="1" fill="#808080"/><rect x="199" y="47" width="1" height="30" fill="#808080"/><rect x="202" y="46" width="32" height="32" fill="#c0c0c0"/><rect x="202" y="77" width="32" height="1" fill="#000000"/><rect x="233" y="46" width="1" height="32" fill="#000000"/><rect x="202" y="46" width="31" height="1" fill="#ffffff"/><rect x="202" y="46" width="1" height="31" fill="#ffffff"/><rect x="203" y="76" width="30" height="1" fill="#808080"/><rect x="232" y="47" width="1" height="30" fill="#808080"/><rect x="329" y="46" width="32" height="32" fill="#c0c0c0"/><rect x="329" y="77" width="32" height="1" fill="#000000"/><rect x="360" y="46" width="1" height="32" fill="#000000"/><rect x="329" y="46" width="31" height="1" fill="#ffffff"/><rect x="329" y="46" width="1" height="31" fill="#ffffff"/><rect x="330" y="76" width="30" height="1" fill="#808080"/><rect x="359" y="47" width="1" height="30" fill="#808080"/><rect x="362" y="46" width="32" height="32" fill="#c0c0c0"/><rect x="362" y="77" width="32" height="1" fill="#000000"/><rect x="393" y="46" width="1" height="32" fill="#000000"/><rect x="362" y="46" width="31" height="1" fill="#ffffff"/><rect x="362" y="46" width="1" height="31" fill="#ffffff"/><rect x="363" y="76" width="30" height="1" fill="#808080"/><rect x="392" y="47" width="1" height="30" fill="#808080"/><rect x="395" y="46" width="32" height="32" fill="#c0c0c0"/><rect x="395" y="77" width="32" height="1" fill="#000000"/><rect x="426" y="46" width="1" height="32" fill="#000000"/><rect x="395" y="46" width="31" height="1" fill="#ffffff"/><rect x="395" y="46" width="1" height="31" fill="#ffffff"/><rect x="396" y="76" width="30" height="1" fill="#808080"/><rect x="425" y="47" width="1" height="30" fill="#808080"/><rect x="444" y="46" width="32" height="32" fill="#c0c0c0"/><rect x="444" y="77" width="32" height="1" fill="#000000"/><rect x="475" y="46" width="1" height="32" fill="#000000"/><rect x="444" y="46" width="31" height="1" fill="#ffffff"/><rect x="444" y="46" width="1" height="31" fill="#ffffff"/><rect x="445" y="76" width="30" height="1" fill="#808080"/><rect x="474" y="47" width="1" height="30" fill="#808080"/><rect x="830" y="46" width="32" height="32" fill="#c0c0c0"/><rect x="830" y="77" width="32" height="1" fill="#000000"/><rect x="861" y="46" width="1" height="32" fill="#000000"/><rect x="830" y="46" width="31" height="1" fill="#ffffff"/><rect x="830" y="46" width="1" height="31" fill="#ffffff"/><rect x="831" y="76" width="30" height="1" fill="#808080"/><rect x="860" y="47" width="1" height="30" fill="#808080"/><rect x="863" y="46" width="32" height="32" fill="#c0c0c0"/><rect x="863" y="77" width="32" height="1" fill="#000000"/><rect x="894" y="46" width="1" height="32" fill="#000000"/><rect x="863" y="46" width="31" height="1" fill="#ffffff"/><rect x="863" y="46" width="1" height="31" fill="#ffffff"/><rect x="864" y="76" width="30" height="1" fill="#808080"/><rect x="893" y="47" width="1" height="30" fill="#808080"/><rect x="896" y="46" width="32" height="32" fill="#c0c0c0"/><rect x="896" y="77" width="32" height="1" fill="#000000"/><rect x="927" y="46" width="1" height="32" fill="#000000"/><rect x="896" y="46" width="31" height="1" fill="#ffffff"/><rect x="896" y="46" width="1" height="31" fill="#ffffff"/><rect x="897" y="76" width="30" height="1" fill="#808080"/><rect x="926" y="47" width="1" height="30" fill="#808080"/><rect x="973" y="46" width="32" height="32" fill="#c0c0c0"/><rect x="973" y="77" width="32" height="1" fill="#000000"/><rect x="1004" y="46" width="1" height="32" fill="#000000"/><rect x="973" y="46" width="31" height="1" fill="#ffffff"/><rect x="973" y="46" width="1" height="31" fill="#ffffff"/><rect x="974" y="76" width="30" height="1" fill="#808080"/><rect x="1003" y="47" width="1" height="30" fill="#808080"/><rect x="584" y="51" width="110" height="25" fill="#c0c0c0"/><rect x="584" y="75" width="110" height="1" fill="#000000"/><rect x="693" y="51" width="1" height="25" fill="#000000"/><rect x="584" y="51" width="109" height="1" fill="#ffffff"/><rect x="584" y="51" width="1" height="24" fill="#ffffff"/><rect x="585" y="74" width="108" height="1" fill="#808080"/><rect x="692" y="52" width="1" height="23" fill="#808080"/><rect x="696" y="51" width="110" height="25" fill="#c0c0c0"/><rect x="696" y="75" width="110" height="1" fill="#000000"/><rect x="805" y="51" width="1" height="25" fill="#000000"/><rect x="696" y="51" width="109" height="1" fill="#ffffff"/><rect x="696" y="51" width="1" height="24" fill="#ffffff"/><rect x="697" y="74" width="108" height="1" fill="#808080"/><rect x="804" y="52" width="1" height="23" fill="#808080"/><rect x="1" y="82" width="1022" height="1" fill="#000000"/><rect x="1" y="82" width="1" height="651" fill="#000000"/><rect x="0" y="81" width="1" height="652" fill="#808080"/><rect x="1022" y="45" width="1" height="35" fill="#808080"/><rect x="1023" y="44" width="1" height="41" fill="#ffffff"/><rect x="2" y="83" width="789" height="35" fill="#a0a0a4"/><rect x="2" y="83" width="790" height="1" fill="#ffffff"/><rect x="2" y="83" width="1" height="36" fill="#ffffff"/><rect x="3" y="84" width="788" height="1" fill="#808080"/><rect x="3" y="84" width="1" height="34" fill="#808080"/><rect x="2" y="118" width="790" height="1" fill="#ffffff"/><rect x="2" y="119" width="791" height="1" fill="#808080"/><rect x="791" y="83" width="1" height="36" fill="#ffffff"/><rect x="792" y="83" width="1" height="37" fill="#808080"/><rect x="793" y="83" width="1" height="650" fill="#808080"/><rect x="792" y="83" width="231" height="1" fill="#808080"/><rect x="794" y="84" width="1" height="648" fill="#000000"/><rect x="794" y="84" width="228" height="1" fill="#000000"/><rect x="795" y="85" width="229" height="648" fill="#ffffff"/><rect x="797" y="87" width="1" height="644" fill="#808080"/><rect x="797" y="87" width="223" height="1" fill="#808080"/><defs><pattern id="dz" x="799" y="89" width="4" height="4" patternUnits="userSpaceOnUse"><rect x="0" y="0" width="1" height="1" fill="#ffff00"/><rect x="2" y="2" width="1" height="1" fill="#ffff00"/></pattern></defs><rect x="798" y="88" width="219" height="641" fill="url(#dz)"/><rect x="1020" y="85" width="1" height="647" fill="#c0c0c0"/><rect x="1022" y="85" width="1" height="649" fill="#c0c0c0"/><rect x="795" y="731" width="226" height="1" fill="#c0c0c0"/><rect x="0" y="733" width="1024" height="1" fill="#c0c0c0"/><rect x="0" y="734" width="1024" height="1" fill="#ffffff"/><rect x="0" y="735" width="1024" height="1" fill="#c0c0c0"/><rect x="0" y="736" width="1024" height="1" fill="#ffffff"/><rect x="0" y="737" width="1024" height="2" fill="#c0c0c0"/><text x="856" y="109" font-family='"Liberation Serif",serif' font-size="23" font-weight="bold" fill="#c0c0c0" textLength="128" lengthAdjust="spacing">ΧΕΙΡΙΣΜΟΙ</text><text x="855" y="108" font-family='"Liberation Serif",serif' font-size="23" font-weight="bold" fill="#c0c0c0" textLength="128" lengthAdjust="spacing">ΧΕΙΡΙΣΜΟΙ</text><text x="854" y="107" font-family='"Liberation Serif",serif' font-size="23" font-weight="bold" fill="#c0c0c0" textLength="128" lengthAdjust="spacing">ΧΕΙΡΙΣΜΟΙ</text><text x="853" y="106" font-family='"Liberation Serif",serif' font-size="23" font-weight="bold" fill="#c0c0c0" textLength="128" lengthAdjust="spacing">ΧΕΙΡΙΣΜΟΙ</text><text x="851" y="104" font-family='"Liberation Serif",serif' font-size="23" font-weight="bold" fill="#00ffff" textLength="128" lengthAdjust="spacing">ΧΕΙΡΙΣΜΟΙ</text><text x="852" y="105" font-family='"Liberation Serif",serif' font-size="23" font-weight="bold" fill="#ff0000" textLength="128" lengthAdjust="spacing">ΧΕΙΡΙΣΜΟΙ</text><rect x="802" y="113" width="207" height="1" fill="#808080"/><rect x="802" y="113" width="1" height="21" fill="#808080"/><rect x="803" y="114" width="206" height="20" fill="#000000"/><rect x="804" y="115" width="204" height="18" fill="#0000ff"/><rect x="803" y="134" width="207" height="1" fill="#ffffff"/><rect x="1009" y="114" width="1" height="21" fill="#ffffff"/><text x="852" y="127" font-family='"Liberation Serif",serif' font-size="14" font-weight="bold" fill="#ffffff" textLength="113" lengthAdjust="spacing">Α/Σ ΑΝΥΨΩΣΗΣ</text><rect x="802" y="257" width="207" height="1" fill="#808080"/><rect x="802" y="257" width="1" height="21" fill="#808080"/><rect x="803" y="258" width="206" height="20" fill="#000000"/><rect x="804" y="259" width="204" height="18" fill="#0000ff"/><rect x="803" y="278" width="207" height="1" fill="#ffffff"/><rect x="1009" y="258" width="1" height="21" fill="#ffffff"/><text x="868" y="271" font-family='"Liberation Serif",serif' font-size="14" font-weight="bold" fill="#ffffff" textLength="79" lengthAdjust="spacing">ΕΣΧΑΡΩΣΗ</text><rect x="802" y="374" width="207" height="1" fill="#808080"/><rect x="802" y="374" width="1" height="21" fill="#808080"/><rect x="803" y="375" width="206" height="20" fill="#000000"/><rect x="804" y="376" width="204" height="18" fill="#0000ff"/><rect x="803" y="395" width="207" height="1" fill="#ffffff"/><rect x="1009" y="375" width="1" height="21" fill="#ffffff"/><text x="832" y="388" font-family='"Liberation Serif",serif' font-size="14" font-weight="bold" fill="#ffffff" textLength="156" lengthAdjust="spacing">Α/Σ ΒΟΘΡΟΛΥΜΑΤΩΝ</text><rect x="802" y="518" width="207" height="1" fill="#808080"/><rect x="802" y="518" width="1" height="21" fill="#808080"/><rect x="803" y="519" width="206" height="20" fill="#000000"/><rect x="804" y="520" width="204" height="18" fill="#0000ff"/><rect x="803" y="539" width="207" height="1" fill="#ffffff"/><rect x="1009" y="519" width="1" height="21" fill="#ffffff"/><text x="857" y="532" font-family='"Liberation Serif",serif' font-size="14" font-weight="bold" fill="#ffffff" textLength="101" lengthAdjust="spacing">ΑΠΟΣΜΗΣΕΙΣ</text><text x="8" y="105" font-family='"Liberation Serif",serif' font-size="18" font-weight="bold" fill="#ffffff" textLength="49" lengthAdjust="spacingAndGlyphs">PLC 1</text><text x="8" y="104" font-family='"Liberation Serif",serif' font-size="18" font-weight="bold" fill="#ffffff" textLength="49" lengthAdjust="spacingAndGlyphs">PLC 1</text><text x="9" y="105" font-family='"Liberation Serif",serif' font-size="18" font-weight="bold" fill="url(#rb)" textLength="49" lengthAdjust="spacingAndGlyphs">PLC 1</text><text x="120" y="105" font-family='"Liberation Serif",serif' font-size="18" font-weight="bold" fill="#ffffff" textLength="49" lengthAdjust="spacingAndGlyphs">PLC 2</text><text x="120" y="104" font-family='"Liberation Serif",serif' font-size="18" font-weight="bold" fill="#ffffff" textLength="49" lengthAdjust="spacingAndGlyphs">PLC 2</text><text x="121" y="105" font-family='"Liberation Serif",serif' font-size="18" font-weight="bold" fill="url(#rb)" textLength="49" lengthAdjust="spacingAndGlyphs">PLC 2</text><rect x="68" y="85" width="32" height="32" fill="#ffffff"/><rect x="68" y="85" width="30" height="1" fill="#000000"/><rect x="68" y="85" width="1" height="30" fill="#000000"/><rect x="69" y="86" width="29" height="1" fill="#808080"/><rect x="69" y="86" width="1" height="29" fill="#808080"/><rect x="70" y="87" width="27" height="27" fill="#000000"/><rect x="69" y="115" width="30" height="1" fill="#a0a0a4"/><rect x="98" y="86" width="1" height="30" fill="#a0a0a4"/><rect x="180" y="85" width="32" height="32" fill="#ffffff"/><rect x="180" y="85" width="30" height="1" fill="#000000"/><rect x="180" y="85" width="1" height="30" fill="#000000"/><rect x="181" y="86" width="29" height="1" fill="#808080"/><rect x="181" y="86" width="1" height="29" fill="#808080"/><rect x="182" y="87" width="27" height="27" fill="#000000"/><rect x="181" y="115" width="30" height="1" fill="#a0a0a4"/><rect x="210" y="86" width="1" height="30" fill="#a0a0a4"/><rect x="71" y="102" width="7" height="1" fill="#ff0000"/><rect x="71" y="104" width="7" height="1" fill="#ff0000"/><rect x="87" y="102" width="9" height="1" fill="#ff0000"/><rect x="87" y="104" width="9" height="1" fill="#ff0000"/><path d="M83 94 L79.5 101.5 L82 102 L86 98.5 L82.5 106" fill="none" stroke="#ff0000" stroke-width="1.6" shape-rendering="auto"/><path d="M79.5 106 L86 105.5 L82 110.5 Z" fill="#ff0000" shape-rendering="auto"/><rect x="658" y="90" width="119" height="23" fill="#c0c0c0"/><rect x="658" y="112" width="119" height="1" fill="#000000"/><rect x="776" y="90" width="1" height="23" fill="#000000"/><rect x="658" y="90" width="118" height="1" fill="#ffffff"/><rect x="658" y="90" width="1" height="22" fill="#ffffff"/><rect x="659" y="111" width="117" height="1" fill="#808080"/><rect x="775" y="91" width="1" height="21" fill="#808080"/><g shape-rendering="auto"><circle cx="676.5" cy="101" r="8.2" fill="#0000e0" stroke="#ff0000" stroke-width="1.8"/><path d="M676.5 93.5 L684 106 L669 106 Z" fill="#ffff00"/><rect x="675.7" y="96.5" width="1.8" height="5" fill="#000"/><rect x="675.7" y="103" width="1.8" height="1.6" fill="#000"/><path d="M683 91.5 L687 91 L686 95.5 Z" fill="#ff0000"/></g><text x="690" y="105" font-family='"Liberation Serif",serif' font-size="13" font-weight="bold" fill="#0000ff" textLength="78" lengthAdjust="spacingAndGlyphs">Reset Βλαβών</text><rect x="13" y="50" width="25" height="24" fill="#000000"/><rect x="14" y="52" width="22" height="1" fill="#008080"/><rect x="35" y="52" width="1" height="22" fill="#008080"/><rect x="11" y="53" width="24" height="23" fill="#000000"/><rect x="12" y="54" width="22" height="21" fill="#c0c0c0"/><rect x="75" y="50" width="25" height="24" fill="#000000"/><rect x="76" y="52" width="22" height="1" fill="#ff0000"/><rect x="97" y="52" width="1" height="22" fill="#ff0000"/><rect x="73" y="53" width="24" height="23" fill="#000000"/><rect x="74" y="54" width="22" height="21" fill="#c0c0c0"/><text x="85" y="71" font-family='"Liberation Sans",sans-serif' font-size="18" font-weight="bold" fill="#0000ff" text-anchor="middle" stroke="#0000ff" stroke-width="0.7">1</text><rect x="108" y="50" width="25" height="24" fill="#000000"/><rect x="109" y="52" width="22" height="1" fill="#00ffff"/><rect x="130" y="52" width="1" height="22" fill="#00ffff"/><rect x="106" y="53" width="24" height="23" fill="#000000"/><rect x="107" y="54" width="22" height="21" fill="#c0c0c0"/><text x="118" y="71" font-family='"Liberation Sans",sans-serif' font-size="18" font-weight="bold" fill="#0000ff" text-anchor="middle" stroke="#0000ff" stroke-width="0.7">2</text><rect x="141" y="50" width="25" height="24" fill="#000000"/><rect x="142" y="52" width="22" height="1" fill="#ffff00"/><rect x="163" y="52" width="1" height="22" fill="#ffff00"/><rect x="139" y="53" width="24" height="23" fill="#000000"/><rect x="140" y="54" width="22" height="21" fill="#c0c0c0"/><text x="151" y="71" font-family='"Liberation Sans",sans-serif' font-size="18" font-weight="bold" fill="#0000ff" text-anchor="middle" stroke="#0000ff" stroke-width="0.7">3</text><rect x="174" y="50" width="25" height="24" fill="#000000"/><rect x="175" y="52" width="22" height="1" fill="#00ff00"/><rect x="196" y="52" width="1" height="22" fill="#00ff00"/><rect x="172" y="53" width="24" height="23" fill="#000000"/><rect x="173" y="54" width="22" height="21" fill="#c0c0c0"/><text x="184" y="71" font-family='"Liberation Sans",sans-serif' font-size="18" font-weight="bold" fill="#0000ff" text-anchor="middle" stroke="#0000ff" stroke-width="0.7">4</text><rect x="207" y="50" width="25" height="24" fill="#000000"/><rect x="208" y="52" width="22" height="1" fill="#ff00ff"/><rect x="229" y="52" width="1" height="22" fill="#ff00ff"/><rect x="205" y="53" width="24" height="23" fill="#000000"/><rect x="206" y="54" width="22" height="21" fill="#c0c0c0"/><text x="217" y="71" font-family='"Liberation Sans",sans-serif' font-size="18" font-weight="bold" fill="#0000ff" text-anchor="middle" stroke="#0000ff" stroke-width="0.7">5</text><rect x="16" y="70" width="9" height="1" fill="#e0e0d0"/><rect x="16" y="56" width="1" height="15" fill="#e0e0d0"/><rect x="24" y="56" width="1" height="15" fill="#e0e0d0"/><rect x="27" y="59" width="1" height="14" fill="#e0e0d0"/><rect x="27" y="59" width="7" height="1" fill="#e0e0d0"/><rect x="14" y="56" width="2" height="18" fill="#0000ff"/><rect x="14" y="72" width="13" height="2" fill="#0000ff"/><rect x="25" y="56" width="2" height="18" fill="#0000ff"/><rect x="25" y="56" width="9" height="2" fill="#0000ff"/><rect x="20" y="62" width="7" height="2" fill="#0000ff"/><rect x="29" y="72" width="3" height="2" fill="#0000ff"/><rect x="17" y="54" width="2" height="2" fill="#00ff00"/><rect x="20" y="54" width="2" height="2" fill="#00ff00"/><rect x="23" y="54" width="2" height="2" fill="#00ff00"/><rect x="20" y="58" width="2" height="2" fill="#00ff00"/><rect x="17" y="62" width="2" height="2" fill="#00ff00"/><rect x="17" y="66" width="2" height="2" fill="#00ff00"/><rect x="12" y="59" width="2" height="2" fill="#00ff00"/><rect x="12" y="62" width="2" height="2" fill="#00ff00"/><rect x="12" y="66" width="2" height="2" fill="#00ff00"/><rect x="29" y="63" width="2" height="2" fill="#00ff00"/><rect x="32" y="60" width="2" height="2" fill="#00ff00"/><rect x="32" y="63" width="2" height="2" fill="#00ff00"/><rect x="32" y="67" width="2" height="2" fill="#00ff00"/><rect x="18" y="69" width="2" height="2" fill="#ffff00"/><rect x="21" y="69" width="2" height="2" fill="#ffff00"/><rect x="27" y="72" width="2" height="2" fill="#ffff00"/><rect x="29" y="55" width="2" height="1" fill="#00ff00"/><rect x="29" y="56" width="2" height="2" fill="#ff0000"/><rect x="21" y="72" width="2" height="1" fill="#00ff00"/><rect x="21" y="73" width="2" height="1" fill="#ff0000"/><rect x="14" y="62" width="2" height="1" fill="#00ff00"/><rect x="14" y="63" width="1" height="1" fill="#ff0000"/><g shape-rendering="auto"><path d="M346.5 52 L360.5 74 L334 74.5 Z" fill="#000"/><path d="M345 51 L358.5 73 L332.5 73 Z" fill="#ffff00" stroke="#000" stroke-width="1.3" stroke-linejoin="round"/><path d="M343.6 57.5 Q345 55 346.4 57.5 L345.8 66 L344.2 66 Z" fill="#000"/><circle cx="345" cy="69.7" r="1.8" fill="#000"/></g><g shape-rendering="auto"><rect x="366.5" y="50.5" width="23" height="23" rx="1.5" fill="#0000ff" stroke="#000" stroke-width="1"/><rect x="372" y="67" width="14" height="6.5" fill="#fff"/><rect x="374.5" y="68.5" width="3" height="3.5" fill="#0000ff"/><rect x="383.3" y="67" width="1" height="6" fill="#c0c0c0"/><path d="M378.5 51.5 L385 64 L372 64 Z" fill="#ffff00"/><rect x="377.7" y="54.5" width="1.8" height="5" fill="#000"/><rect x="377.5" y="61" width="2.2" height="1.6" fill="#000"/><line x1="369.5" y1="51" x2="369.5" y2="62" stroke="#fff" stroke-width="1" stroke-dasharray="1 1 3 1"/></g><g shape-rendering="auto"><path d="M397.5 56 L404 51.5 L404 66 L397.5 71 Z" fill="#e8e8e8" stroke="#000" stroke-width="0.8"/><path d="M413 51.5 L425.5 58 L425.5 71.5 L413 66 Z" fill="#f4f4f4" stroke="#000" stroke-width="0.8"/><path d="M397.5 71 L404 66 L425.5 71.5 L411.5 76.5 Z" fill="#fff" stroke="#000" stroke-width="0.8"/><rect x="405" y="50" width="7" height="18" fill="#ffee00" stroke="#000" stroke-width="0.7"/><ellipse cx="408.5" cy="49.5" rx="3.5" ry="1.8" fill="#ffffa0" stroke="#000" stroke-width="0.5"/><rect x="409.5" y="58" width="6" height="13" fill="#00c8c8" stroke="#004040" stroke-width="0.7"/><ellipse cx="412.5" cy="57.5" rx="3" ry="1.6" fill="#c0ffff" stroke="#000" stroke-width="0.5"/><rect x="413.5" y="63" width="7" height="9" fill="#ff00ff" stroke="#400040" stroke-width="0.7"/><ellipse cx="417" cy="62.8" rx="3.5" ry="1.5" fill="#ff40ff" stroke="#000" stroke-width="0.5"/></g><g shape-rendering="auto"><g transform="rotate(-42 460 62)"><rect x="450" y="46" width="9" height="10" fill="#fff" stroke="#000" stroke-width="0.9"/><line x1="452.5" y1="48" x2="452.5" y2="54" stroke="#0000ff" stroke-width="1"/><line x1="455.5" y1="48" x2="455.5" y2="54" stroke="#0000ff" stroke-width="1"/><rect x="452" y="55" width="15" height="17" rx="1" fill="#e4e4e4" stroke="#000" stroke-width="0.9"/><rect x="456" y="72" width="8" height="5" fill="#d8d8d8" stroke="#000" stroke-width="0.9"/><line x1="467.5" y1="57" x2="467.5" y2="71" stroke="#000" stroke-width="1"/></g></g><rect x="844" y="49" width="16" height="21" fill="#808080"/><rect x="845" y="50" width="14" height="2" fill="#00ffff"/><rect x="845" y="53" width="14" height="2" fill="#00ffff"/><rect x="845" y="56" width="14" height="2" fill="#00ffff"/><rect x="845" y="59" width="14" height="2" fill="#00ffff"/><rect x="845" y="62" width="14" height="2" fill="#00ffff"/><rect x="845" y="65" width="14" height="2" fill="#00ffff"/><rect x="845" y="68" width="14" height="2" fill="#00ffff"/><rect x="851" y="50" width="2" height="2" fill="#808080"/><rect x="856" y="50" width="1" height="2" fill="#808080"/><rect x="853" y="53" width="2" height="5" fill="#808080"/><rect x="832" y="60" width="21" height="16" fill="#404040"/><rect x="833" y="62" width="5" height="13" fill="#ffffff"/><rect x="835" y="67" width="2" height="2" fill="#404040"/><rect x="835" y="70" width="2" height="2" fill="#404040"/><rect x="839" y="62" width="2" height="13" fill="#ffffff"/><rect x="840" y="63" width="1" height="11" fill="#80c0c0"/><rect x="842" y="62" width="2" height="13" fill="#ffffff"/><rect x="843" y="63" width="1" height="11" fill="#80c0c0"/><rect x="845" y="62" width="2" height="13" fill="#ffffff"/><rect x="846" y="63" width="1" height="11" fill="#80c0c0"/><rect x="848" y="62" width="2" height="13" fill="#ffffff"/><rect x="849" y="63" width="1" height="11" fill="#80c0c0"/><rect x="832" y="60" width="21" height="1" fill="#808080"/><g shape-rendering="auto"><path d="M878 71 L892 63 L894 66.5 L881 76.5 Z" fill="#000"/><text x="878" y="77" font-family='"Liberation Sans",sans-serif' font-weight="bold" font-size="38" fill="#c0a000" stroke="#000" stroke-width="1.2" text-anchor="middle">?</text><text x="876.5" y="76" font-family='"Liberation Sans",sans-serif' font-weight="bold" font-size="38" fill="#ffff00" stroke="#000" stroke-width="1" text-anchor="middle">?</text></g><g shape-rendering="auto"><rect x="904" y="49" width="20" height="15" fill="#808080" stroke="#000" stroke-width="1"/><rect x="906.5" y="51.5" width="14" height="11" fill="#c0c0c0" stroke="#404040" stroke-width="0.6"/><line x1="918.5" y1="52.5" x2="918.5" y2="57" stroke="#fff" stroke-width="1"/><rect x="899.5" y="66.5" width="26" height="8.5" fill="#e8e8e8" stroke="#000" stroke-width="1"/><rect x="917.5" y="66.5" width="8" height="7" fill="#fff" stroke="#000" stroke-width="0.9"/><line x1="919" y1="70" x2="924" y2="70" stroke="#000" stroke-width="0.8"/><line x1="902" y1="72.5" x2="910" y2="72.5" stroke="#c00000" stroke-width="1" stroke-dasharray="2 1"/><path d="M899.5 59 Q899.5 55.5 904 55.5 L913 55.5 Q918 55.5 918 59 L917 60.5 L914 60.5 L914 59 L903.5 59 L903.5 60.5 L900.5 60.5 Z" fill="#ffff80" stroke="#000" stroke-width="0.8"/><path d="M903 60 L914.5 60 L917 68 L900.5 68 Z" fill="#ffff80" stroke="#000" stroke-width="0.8"/><circle cx="908.7" cy="63" r="3" fill="#fff" stroke="#606060" stroke-width="1" stroke-dasharray="1 1"/></g><g shape-rendering="auto"><rect x="975" y="69" width="28" height="7" fill="#f0f0f0"/><path d="M975 70 L985 70 L985 72 L980 73 L976 75 Z" fill="#d0d0d0"/><line x1="975" y1="76.5" x2="1004" y2="76.5" stroke="#000" stroke-width="1"/><rect x="985.5" y="48.5" width="15" height="20.5" fill="#808080" stroke="#000" stroke-width="1"/><path d="M992.5 53 L1000.5 48.5 L1000.5 72 L992.5 76.5 Z" fill="#008080" stroke="#000" stroke-width="0.8"/><path d="M992.8 53 L995 51.8 L995 75 L992.8 76.3 Z" fill="#00ffff"/><ellipse cx="996.7" cy="62.5" rx="1" ry="1.5" fill="#fff" stroke="#000" stroke-width="0.5"/><path d="M975.5 57 L982.5 57 L982.5 52 L990.5 59 L982.5 67 L982.5 61.5 L975.5 61.5 Z" fill="#00e0e0" stroke="#000" stroke-width="0.9" stroke-linejoin="round"/><line x1="977" y1="58.5" x2="986" y2="58.5" stroke="#fff" stroke-width="0.9"/></g><g shape-rendering="auto"><path d="M603.5 63 L603.5 60 Q603.5 56.7 607 56.7 Q610.5 56.7 610.5 60 L610.5 63" fill="none" stroke="#000" stroke-width="1.6"/><ellipse cx="607" cy="66.5" rx="6.3" ry="4.6" fill="#b0b0b0" stroke="#000" stroke-width="1.1"/><line x1="601.5" y1="65" x2="612.5" y2="65" stroke="#404040" stroke-width="0.6"/><line x1="601.5" y1="68" x2="612.5" y2="68" stroke="#404040" stroke-width="0.6"/><rect x="606" y="65" width="2" height="3.5" fill="#000"/></g><text x="623" y="69" font-family='"Liberation Serif",serif' font-size="15" font-weight="bold" fill="#0000ff" textLength="55" lengthAdjust="spacingAndGlyphs">Σύνδεση</text><g shape-rendering="auto" transform="translate(1 1)"><path d="M716.5 63 L716.5 60 Q716.5 56.7 720 56.7 Q723.5 56.7 723.5 60" fill="none" stroke="#fff" stroke-width="1.4"/><ellipse cx="720" cy="66.5" rx="6.3" ry="4.6" fill="none" stroke="#fff" stroke-width="1"/></g><g shape-rendering="auto"><path d="M716.5 63 L716.5 60 Q716.5 56.7 720 56.7 Q723.5 56.7 723.5 60" fill="none" stroke="#808080" stroke-width="1.4"/><ellipse cx="720" cy="66.5" rx="6.3" ry="4.6" fill="#c0c0c0" stroke="#808080" stroke-width="1"/><rect x="719" y="65" width="2" height="3.5" fill="#808080"/></g><text x="737" y="70" font-family='"Liberation Serif",serif' font-size="15" font-weight="bold" fill="#ffffff" textLength="55" lengthAdjust="spacingAndGlyphs">Διακοπή</text><text x="736" y="69" font-family='"Liberation Serif",serif' font-size="15" font-weight="bold" fill="#808080" textLength="55" lengthAdjust="spacingAndGlyphs">Διακοπή</text></svg>
</body></html>
